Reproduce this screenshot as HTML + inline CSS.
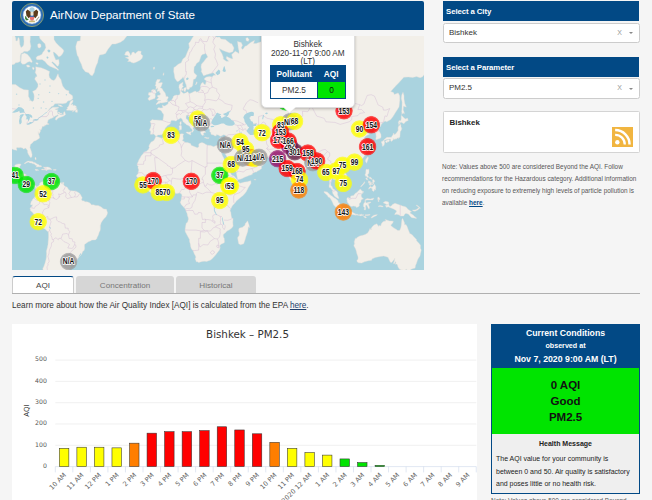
<!DOCTYPE html>
<html lang="en">
<head>
<meta charset="utf-8">
<title>AirNow Department of State</title>
<style>
*{box-sizing:border-box;margin:0;padding:0}
html,body{width:652px;height:500px;overflow:hidden;background:#f5f5f5;font-family:"Liberation Sans",sans-serif;color:#333}
.abs{position:absolute}
#hdr{left:12px;top:1px;width:412px;height:29px;background:#024985;border-radius:2px 2px 0 0;color:#fff}
#hdr .ttl{position:absolute;left:38px;top:-1.5px;line-height:29px;font-size:11.65px;white-space:nowrap}
#map{left:12px;top:36px;width:412px;height:234px;background:#aad3df;overflow:hidden}
.ph{background:#024985;color:#fff;font-weight:bold;font-size:7.8px;line-height:21px;padding-left:3.4px;white-space:nowrap;letter-spacing:-0.1px;overflow:hidden}
.sel{background:#fff;border:1px solid #ccc;border-radius:2.5px;font-size:8px;line-height:18.6px;padding-left:5.4px;color:#333}
.sel .x{position:absolute;right:16.5px;top:0;color:#999;font-size:7px}
.sel .ar{position:absolute;right:6px;top:8.5px;width:0;height:0;border-left:2.5px solid transparent;border-right:2.5px solid transparent;border-top:2.5px solid #888}
#city{left:442.5px;top:111.2px;width:197.2px;height:41.8px;background:#fff;border:1px solid #d4d4d4;border-radius:1.5px}
#city b{position:absolute;left:6px;top:5.5px;font-size:7.9px;color:#222}
#note{left:442px;top:160.9px;width:200px;font-size:6.42px;line-height:11.87px;color:#555;white-space:nowrap}
#note a{color:#024985;font-weight:bold;text-decoration:underline}
.tab{top:276px;height:18px;background:#d6d6d6;border-radius:3px 3px 0 0;font-size:8.1px;line-height:20px;text-align:center;color:#777}
.tab.on{background:#fff;border:1px solid #ccc;border-top:1.5px solid #024985;border-bottom:none;color:#444;line-height:17.5px}
#tabline{left:12px;top:293px;width:628px;height:1px;background:#b0b0b0}
#learn{left:12px;top:300.8px;font-size:8.2px;line-height:10px;white-space:nowrap;color:#333}
#learn a{color:#23406b;text-decoration:underline}
#chart{left:12px;top:324px;width:465px;height:180px;background:#fff}
#cc{left:491px;top:324px;width:149px;height:170px;border:1px solid #024985;background:#eee}
#cc .h{position:absolute;left:0;top:0;width:147px;height:43px;background:#024985;color:#fff;text-align:center;font-weight:bold}
#cc .g{position:absolute;left:0;top:43px;width:147px;height:66px;background:#00e400;color:#111;text-align:center;font-weight:bold;font-size:11.5px;line-height:16.1px;padding-top:8.6px}
#cc .m{position:absolute;left:0;top:109px;width:147px;height:59px;background:#efefef}
</style>
</head>
<body>
<div id="hdr" class="abs">
  <svg class="abs" style="left:8.1px;top:2.3px" width="24" height="24" viewBox="-12 -12 24 24">
    <circle r="11.6" fill="#2f6db3" stroke="#9aa862" stroke-width="0.8"/>
    <circle r="9" fill="#fdfdfb" stroke="#7fa8d8" stroke-width="0.5"/>
    <circle cx="0" cy="-5.2" r="2.6" fill="#a9d0e2"/>
    <path d="M-1.2 -3 L-4.4 -5.6 L-6.2 -3.4 L-5.6 0.2 L-3.4 3.2 L-1.4 1.4Z" fill="#5b3c1c"/>
    <path d="M1.2 -3 L4.4 -5.6 L6.2 -3.4 L5.6 0.2 L3.4 3.2 L1.4 1.4Z" fill="#5b3c1c"/>
    <path d="M-1.3 -3.2 h2.6 v3 h-2.6Z" fill="#e8e2d0"/>
    <path d="M-2.1 0.6 h4.2 v1.3 h-4.2Z" fill="#2f5fa8"/>
    <path d="M-2.1 1.9 h4.2 v1.8 q0 1.6 -2.1 2.2 q-2.1 -0.6 -2.1 -2.2Z" fill="#ea7676"/>
    <path d="M-7 1.2 q-0.6 2.6 1.6 4.2 l2.2 -0.6 q-2.6 -1 -2.6 -3.6Z" fill="#3c7d3c"/>
    <path d="M6.8 1.4 l-3.2 4 l0.9 0.3 l3 -3.6Z" fill="#9a9a8a"/>
    <path d="M-2.4 5.6 l-1 1.6 h6.8 l-1 -1.6Z" fill="#c9b77a"/>
  </svg>
  <div class="ttl">AirNow Department of State</div>
</div>

<div id="map" class="abs">
<svg class="abs" style="left:0;top:0" width="412" height="234" viewBox="0 0 412 234"><path fill="#f2efe9" stroke="#e6dfd8" stroke-width="0.4" stroke-linejoin="round" d="M182.2 -28.7L182.2 -0.9L180.0 2.5L178.4 5.3L176.7 7.5L177.4 11.5L175.0 17.0L173.4 21.0L170.9 22.9L169.2 26.7L166.2 28.2L163.6 30.4L161.9 31.5L161.7 35.7L162.2 37.7L162.9 42.3L165.1 45.5L166.7 45.2L168.1 43.9L170.5 42.0L171.0 40.7L171.5 41.7L172.0 42.7L173.2 46.5L174.2 48.9L174.5 51.5L175.0 52.8L175.4 53.6L176.4 53.4L177.3 53.0L177.7 51.5L179.4 51.2L180.6 49.7L181.1 46.3L181.4 43.6L183.3 42.7L184.4 40.7L184.9 39.4L182.0 36.7L181.9 34.6L182.2 30.8L183.3 29.9L184.5 27.5L187.2 25.6L188.4 22.0L189.2 19.8L190.3 18.6L193.6 17.6L194.3 18.0L195.8 21.0L194.2 22.2L191.9 25.4L189.4 28.2L189.0 31.1L189.7 33.9L189.2 35.3L190.4 37.6L191.6 39.7L194.9 38.6L198.3 37.6L201.3 36.7L203.8 39.2L201.7 39.2L200.1 40.9L197.5 40.6L194.6 40.9L192.5 42.3L192.7 43.9L194.2 44.3L194.0 46.0L193.5 48.6L192.0 48.3L191.0 46.3L189.3 47.4L188.4 50.1L188.5 52.5L187.5 54.7L186.5 55.6L184.5 56.3L183.9 55.2L182.6 55.3L179.3 56.9L177.1 57.7L175.7 55.7L173.5 57.0L171.5 57.6L170.3 56.5L169.1 55.2L169.6 53.1L170.4 51.2L171.5 50.3L170.5 49.5L170.5 48.6L171.0 47.2L171.0 46.3L170.0 46.8L167.7 48.3L167.1 49.5L166.9 51.6L167.5 53.1L167.8 54.9L168.2 56.2L168.1 57.2L167.9 57.8L167.6 58.7L166.9 58.9L165.4 59.3L164.9 59.0L162.6 59.4L161.3 60.4L161.0 61.8L160.2 63.0L159.4 64.5L158.7 64.7L157.3 65.5L156.5 65.8L156.1 66.5L156.1 67.5L155.2 68.5L153.6 69.6L152.8 70.1L151.4 69.8L150.7 69.2L150.2 69.0L150.7 71.2L150.9 71.7L148.8 72.0L146.7 71.6L145.5 72.5L145.6 73.3L146.6 73.7L147.8 74.1L148.8 74.5L149.7 75.2L149.9 76.1L150.4 77.0L151.5 77.9L151.7 79.2L151.3 81.4L150.9 84.1L150.1 84.6L148.4 84.3L147.1 84.2L144.0 84.0L141.7 83.9L140.6 83.4L139.4 84.3L138.0 85.5L138.8 87.1L139.0 89.4L138.8 90.5L138.6 91.6L137.7 93.3L137.6 94.5L138.2 94.7L138.6 95.1L138.7 96.3L138.4 98.3L140.2 98.3L141.8 97.9L142.9 99.3L144.1 100.4L144.5 100.1L146.1 98.9L147.6 98.9L149.3 98.7L149.7 98.9L150.7 97.7L151.7 97.0L152.2 97.0L152.6 95.5L153.7 94.6L152.9 93.1L153.4 91.9L154.8 90.4L155.5 89.5L157.1 88.8L158.9 86.8L158.5 85.9L159.6 84.3L161.1 84.4L162.3 84.6L163.3 85.0L164.5 84.7L165.5 83.6L166.9 83.2L168.3 82.0L169.8 82.8L170.5 84.0L170.9 85.4L171.9 86.6L173.0 87.3L173.8 88.1L174.4 88.7L176.0 89.3L177.1 90.1L178.0 90.5L178.4 91.9L179.7 93.0L180.1 93.3L180.3 94.7L179.5 96.0L180.1 96.4L181.0 95.4L182.0 93.9L180.9 92.6L181.5 91.0L182.0 90.9L183.4 91.8L184.0 92.4L184.2 91.6L183.3 90.5L181.5 89.5L180.4 87.7L179.9 87.6L178.4 87.5L177.0 86.5L175.9 83.9L174.3 82.8L173.9 81.9L174.2 80.7L174.0 79.6L176.3 79.1L176.5 81.0L177.5 79.9L178.7 82.7L180.8 84.1L183.5 86.0L185.2 87.3L185.8 89.1L185.8 90.9L186.7 92.2L187.1 93.0L187.9 94.2L188.9 95.6L188.5 96.6L189.5 98.7L190.9 99.5L191.4 98.7L192.0 99.4L191.4 97.2L192.9 96.4L193.4 96.9L193.4 95.8L192.7 95.3L191.6 93.3L191.5 92.1L191.6 90.6L192.4 91.5L193.2 91.9L194.0 91.6L194.0 89.9L196.5 90.1L197.0 91.8L196.9 93.0L197.9 93.4L197.7 95.4L198.8 96.5L199.0 98.3L200.4 98.7L201.9 99.1L202.8 100.0L204.2 99.8L204.5 98.6L206.7 99.2L208.1 100.3L209.9 99.8L211.1 98.7L212.7 99.1L213.6 99.1L213.3 100.3L212.9 101.4L213.2 102.6L213.0 103.5L212.5 104.6L211.7 106.8L211.3 108.3L210.8 109.4L209.7 110.2L207.2 109.9L207.6 112.4L208.3 114.2L209.3 115.6L210.4 116.6L210.8 115.2L211.4 113.3L211.6 113.6L211.0 116.1L212.8 117.3L214.1 119.4L215.4 121.6L216.8 123.3L218.3 125.7L218.6 128.0L220.5 130.4L221.8 132.3L223.3 134.6L224.2 136.1L224.9 139.8L225.4 142.4L225.7 143.5L228.3 143.2L230.8 142.2L232.5 141.3L235.2 140.2L237.5 139.3L238.7 139.1L240.4 138.3L240.3 137.4L243.5 136.0L244.5 136.0L245.5 135.1L247.2 134.3L249.6 132.5L249.5 131.3L249.6 130.0L251.0 129.6L253.0 126.2L252.5 126.1L251.0 124.2L247.9 122.9L247.2 121.4L247.1 119.2L246.6 120.2L245.5 121.2L244.0 122.7L241.6 123.2L239.3 123.3L238.6 122.4L239.3 121.8L239.2 121.1L239.3 120.0L238.6 119.6L238.0 121.0L237.9 122.1L237.0 120.6L236.9 119.0L236.1 118.0L234.7 116.7L234.2 115.3L233.3 113.5L233.2 112.4L234.2 112.4L235.3 111.4L236.8 112.1L238.1 114.3L239.1 116.4L241.0 117.2L244.8 118.8L247.1 117.6L248.4 117.8L248.3 118.5L249.6 120.5L254.3 121.1L257.1 121.4L259.1 121.2L261.0 121.3L263.3 120.9L264.3 121.0L265.0 122.0L265.8 123.7L267.0 124.2L267.6 125.0L268.9 125.6L270.3 125.3L268.4 126.3L268.2 126.7L269.3 127.8L270.5 129.1L271.6 129.5L273.4 128.6L273.6 127.6L274.2 126.6L274.4 128.7L274.7 130.0L274.6 132.6L275.4 136.0L276.3 138.7L276.8 139.8L277.9 143.0L279.5 145.8L280.4 148.0L281.4 150.5L282.5 151.2L283.5 150.0L285.4 149.1L286.4 147.5L286.4 144.7L287.1 142.7L286.8 140.3L286.8 138.6L288.5 137.4L290.4 136.7L292.1 134.7L293.4 133.7L294.8 132.0L296.3 131.1L297.8 130.2L298.3 128.0L299.2 127.8L300.1 127.7L301.6 127.7L303.7 127.3L304.6 126.4L306.2 126.6L306.6 128.2L307.1 129.2L308.1 130.4L309.2 131.8L310.5 133.4L310.8 134.9L310.2 137.7L311.9 138.1L313.7 136.8L314.7 135.4L315.9 136.8L316.3 139.0L316.7 141.1L317.6 143.8L317.5 148.0L317.1 149.7L317.1 151.5L318.1 151.3L319.1 152.5L320.0 153.7L320.4 154.5L320.4 155.7L320.9 157.7L321.9 159.1L322.1 159.7L322.9 160.5L323.6 161.0L324.7 161.7L325.9 162.5L326.7 162.5L327.1 162.4L326.3 160.6L325.5 158.4L325.6 156.7L325.1 155.8L323.6 154.4L322.9 153.9L322.0 153.2L320.9 152.7L320.1 150.6L318.8 149.3L318.7 147.1L319.6 144.9L319.8 143.6L320.0 142.5L320.8 142.0L321.4 143.0L321.5 143.5L322.1 143.5L323.4 143.7L324.1 144.4L324.8 145.3L325.7 146.9L326.9 147.0L327.4 147.3L328.4 148.0L327.8 150.3L328.9 149.8L330.7 148.6L331.2 147.5L331.7 147.4L333.4 146.4L334.9 145.3L335.2 144.1L335.5 142.7L335.3 141.6L334.7 139.2L333.6 137.5L332.6 136.8L331.0 135.1L329.5 133.0L329.8 131.1L331.1 129.3L331.7 129.0L333.2 128.0L335.1 128.1L336.1 128.6L336.1 130.1L337.2 130.1L337.5 128.6L339.4 127.9L341.2 127.5L342.5 126.9L342.5 125.9L343.5 126.6L344.4 126.1L345.5 125.8L347.7 124.7L350.0 122.7L351.0 121.9L352.5 119.8L353.4 118.4L354.7 116.3L355.9 115.0L356.4 112.7L354.9 111.7L356.4 110.6L356.4 109.0L355.7 108.2L354.7 107.0L354.0 105.4L353.0 103.6L352.0 102.9L352.5 101.6L353.8 100.3L355.7 98.9L357.4 98.4L356.7 97.3L355.5 97.2L354.4 96.6L353.0 97.6L351.5 97.7L351.7 96.6L350.5 96.0L349.5 94.2L350.9 93.9L352.5 92.1L354.7 90.4L355.2 89.9L356.7 90.5L356.2 91.9L355.4 93.2L355.9 94.3L357.0 93.4L360.4 92.0L361.5 92.8L361.9 94.7L361.2 96.0L362.7 96.4L364.1 97.4L363.9 98.9L364.2 100.5L363.8 102.9L364.1 103.8L366.1 103.1L368.4 102.2L368.9 101.4L369.1 100.3L368.9 98.3L368.1 96.7L367.5 95.8L365.7 93.6L365.9 92.4L367.0 91.7L368.5 90.5L369.5 88.1L370.5 86.9L373.0 85.0L374.7 85.7L378.7 83.6L381.0 80.6L383.3 76.8L387.0 71.0L387.8 64.3L387.7 59.8L386.2 56.9L382.3 58.6L381.5 56.6L378.7 55.5L383.4 50.3L387.3 46.2L391.8 41.2L396.2 41.0L400.7 41.4L404.5 40.6L408.1 41.7L410.6 40.7L413.1 37.4L423.1 37.4L423.1 -28.7L253.3 -28.7L253.3 3.0L252.5 6.6L250.0 4.8L249.1 5.7L244.1 7.5L241.6 7.5L242.5 4.4L239.1 6.2L236.7 8.0L234.7 9.8L233.0 10.2L230.8 13.4L229.2 11.9L230.5 9.3L229.2 6.6L225.5 5.5L226.3 11.9L227.0 14.9L227.0 17.6L225.5 16.6L223.3 15.3L219.7 18.6L220.2 20.6L220.8 22.7L219.7 22.7L216.7 21.6L214.7 20.4L214.2 22.2L215.0 23.3L216.7 25.2L214.2 25.2L211.3 22.9L211.3 21.2L210.0 17.8L208.3 14.9L207.3 12.4L210.5 14.3L214.2 15.7L217.5 16.8L220.8 15.7L222.0 11.9L219.7 7.8L218.3 7.5L213.3 3.4L209.0 3.0L207.5 1.1L205.3 1.3L203.4 0.6L201.2 -1.1L200.0 -2.8L199.2 -28.7ZM-13.1 48.6L-0.3 48.6L3.6 48.6L7.5 51.6L11.9 53.7L16.4 54.1L16.5 57.5L16.4 60.3L17.5 62.4L19.2 64.9L20.7 65.4L21.9 64.3L22.0 62.4L22.2 60.3L21.9 58.0L20.6 55.6L23.9 53.7L25.9 50.7L26.0 48.0L23.4 44.1L22.7 43.0L24.7 38.9L23.2 36.4L23.9 33.9L23.7 30.8L27.4 31.5L29.0 31.7L33.6 33.6L37.5 35.5L36.9 39.1L37.5 41.4L39.5 43.8L41.8 44.6L43.5 43.1L44.7 40.4L46.0 37.7L46.8 40.7L49.2 43.9L49.2 44.9L50.7 50.0L53.2 53.3L54.8 54.3L57.0 54.9L56.8 56.6L57.2 57.5L58.5 58.3L60.5 59.7L60.8 62.4L59.5 63.8L58.3 64.6L55.7 65.1L54.3 67.0L50.5 67.8L47.5 67.6L42.8 67.8L41.2 70.1L39.9 70.3L37.3 73.0L34.9 76.3L37.6 73.7L39.3 72.2L41.0 71.2L46.5 71.2L46.5 72.1L42.8 73.2L45.2 73.9L46.0 73.5L45.2 75.6L46.0 77.8L47.2 78.0L49.0 79.0L50.3 78.5L51.2 79.2L51.8 76.1L52.7 75.7L53.3 77.8L53.6 78.5L51.8 79.9L47.6 81.6L46.3 82.1L44.2 84.3L43.3 83.4L43.8 81.6L46.2 79.8L46.0 78.7L43.4 80.0L41.8 80.9L41.2 81.6L39.8 82.3L38.7 82.5L36.5 83.8L35.7 85.1L35.9 86.0L35.2 86.7L35.9 87.6L36.0 88.1L36.9 88.2L36.9 87.4L36.5 87.4L36.9 88.3L35.9 88.5L34.9 88.6L33.7 89.1L32.0 89.2L33.5 89.7L31.0 90.6L30.2 90.6L30.2 90.9L29.5 93.3L28.7 94.2L27.7 93.0L28.4 94.5L28.4 95.5L27.9 96.4L26.9 98.1L26.4 97.0L26.2 95.6L26.4 98.3L26.9 98.5L27.7 101.9L26.0 103.2L23.6 104.7L22.0 105.0L20.4 106.9L18.5 108.4L17.9 111.6L19.3 115.3L20.1 118.5L20.0 120.3L19.5 121.3L18.4 121.4L17.2 119.6L16.5 118.5L15.7 116.7L15.5 114.6L15.1 113.9L13.5 112.1L11.9 113.0L11.3 112.9L10.7 112.0L8.2 111.6L6.9 111.8L5.0 111.6L4.4 112.1L4.8 113.6L5.0 114.2L4.5 114.3L3.2 114.0L1.6 113.7L0.2 113.1L-13.1 113.1L-13.1 133.3L-0.9 133.3L0.6 133.1L2.4 131.9L2.6 131.0L2.9 129.2L4.1 128.4L6.5 127.9L8.5 127.9L9.0 128.7L8.5 129.6L7.8 130.3L7.8 131.8L7.2 133.3L6.5 133.3L6.5 135.1L6.4 136.7L5.5 137.5L5.4 138.0L5.9 138.1L7.0 138.0L7.8 138.1L8.9 138.1L10.2 137.8L11.9 137.7L13.0 138.0L15.0 139.4L14.5 141.1L14.4 142.9L14.0 144.6L14.0 146.4L15.1 148.0L15.9 148.6L16.5 149.1L17.0 149.7L18.5 150.0L20.4 149.1L20.8 148.7L22.0 148.9L23.7 149.7L24.6 150.2L25.6 151.2L25.4 150.3L26.2 149.9L27.2 149.0L27.5 148.8L27.7 147.3L28.9 146.2L29.9 145.8L32.0 145.3L34.1 143.8L35.0 144.4L34.6 144.9L33.6 145.3L34.2 146.3L35.2 146.3L36.5 145.4L36.4 144.6L36.9 144.2L37.2 145.1L37.5 145.5L39.5 145.9L40.2 147.1L42.0 146.9L43.4 146.9L45.2 147.8L45.7 147.7L46.5 147.2L48.5 146.8L50.3 146.8L49.3 147.6L51.8 148.6L52.2 149.7L53.5 150.5L55.2 151.3L56.6 153.4L58.3 154.7L61.5 154.9L63.5 155.0L66.3 156.4L67.7 157.5L68.3 158.2L70.2 161.7L69.5 163.7L70.2 164.7L72.6 165.0L72.8 165.9L73.6 165.7L74.6 165.7L75.8 166.1L78.0 167.0L79.6 168.9L81.1 168.7L83.8 169.4L86.0 169.4L89.3 170.9L90.6 172.2L91.8 172.9L94.5 173.3L94.8 174.4L95.5 176.6L95.3 178.1L94.0 180.8L91.7 183.0L89.3 186.4L88.4 189.6L88.4 192.5L88.1 194.7L87.3 196.1L86.3 199.2L85.1 201.5L85.1 202.3L83.5 203.9L81.5 204.0L79.6 204.1L79.1 204.7L76.3 205.8L73.6 207.7L72.6 208.6L72.5 209.9L72.6 212.5L72.2 214.2L70.6 215.8L69.7 218.1L68.3 219.8L66.7 221.3L64.5 224.5L61.9 226.9L59.8 226.8L57.1 225.9L56.2 225.0L56.2 226.2L57.0 226.7L58.2 227.9L59.0 229.7L57.6 233.2L55.7 234.5L55.7 248.8L31.0 248.8L31.0 234.0L30.8 232.4L31.7 230.7L32.9 227.6L34.1 223.1L34.4 221.0L34.6 217.0L34.4 215.2L35.4 211.5L36.0 208.4L36.2 205.2L36.5 202.4L36.6 199.1L36.4 196.1L34.6 194.6L33.5 193.4L32.4 192.7L29.7 191.4L28.2 190.6L26.4 187.9L26.0 186.5L24.9 184.9L24.2 183.3L22.5 179.9L21.8 178.3L20.9 177.1L20.4 176.2L18.3 174.5L18.4 173.1L18.0 172.5L19.5 170.5L20.2 170.2L20.4 168.5L19.7 169.0L18.5 168.4L19.0 166.3L19.4 165.3L20.1 164.6L20.8 163.1L22.0 162.0L22.2 161.7L23.2 160.4L25.0 158.2L24.4 157.5L24.3 155.5L24.5 154.4L23.7 152.7L23.3 152.2L23.0 150.8L22.0 150.3L21.0 149.7L20.5 150.3L19.5 150.8L20.2 152.3L18.7 152.7L18.2 151.8L17.4 151.2L16.4 150.9L15.4 151.3L14.7 150.7L14.0 150.6L13.7 149.5L13.3 149.0L12.1 148.0L11.7 148.7L10.5 147.5L10.3 146.4L10.4 145.8L8.2 143.7L7.7 142.9L7.2 142.4L6.0 142.6L3.8 141.8L2.1 141.3L-0.1 140.3L-13.1 140.3ZM143.6 100.8L144.6 100.6L148.4 101.8L150.1 102.2L152.4 101.0L155.1 99.3L158.4 98.7L161.7 98.7L166.4 98.5L169.7 97.7L171.7 98.1L171.0 99.5L171.0 100.8L171.4 103.0L170.2 104.6L171.7 105.2L173.4 106.6L175.4 106.6L178.5 107.6L179.4 109.4L181.0 110.0L183.4 110.9L185.4 111.7L186.9 110.8L186.7 108.4L187.7 107.2L190.0 106.6L191.9 107.2L193.4 108.2L195.4 109.2L198.7 109.6L201.7 110.7L203.2 110.0L205.0 109.3L206.3 109.4L207.2 109.8L208.3 110.2L208.3 112.3L207.5 112.3L207.7 113.1L208.5 115.3L209.7 117.6L210.0 118.5L210.5 119.7L211.5 121.5L212.5 123.7L212.7 125.2L214.3 126.8L215.0 128.9L215.3 131.4L215.5 132.3L216.2 133.5L217.7 134.2L218.5 136.7L219.2 138.4L220.3 139.4L222.0 140.1L224.5 142.9L225.5 143.7L225.5 144.7L225.2 145.3L224.3 145.3L225.8 145.7L228.3 147.2L230.8 146.6L232.5 146.1L235.3 145.8L237.5 145.1L238.8 144.8L239.0 147.3L238.1 148.8L236.5 151.3L235.0 154.2L234.2 155.8L232.5 158.0L230.5 159.9L228.8 161.3L228.0 161.9L225.8 163.7L224.2 165.3L222.7 167.4L221.5 168.5L220.2 170.0L219.5 171.4L218.5 173.2L218.0 175.0L218.8 176.0L219.0 178.1L219.2 179.6L219.5 181.4L220.3 181.9L221.0 182.6L220.8 186.5L221.0 188.9L221.2 190.0L219.8 192.0L217.5 193.8L215.0 195.0L213.8 196.6L211.5 198.3L211.2 199.9L211.8 201.7L212.2 202.3L212.5 205.7L212.2 206.8L209.5 207.9L207.7 209.5L208.2 211.2L207.5 214.1L206.8 214.8L205.1 216.9L203.8 218.8L202.5 220.2L199.9 223.0L198.2 224.2L196.0 224.9L194.7 225.4L192.4 225.2L190.2 225.4L186.7 226.6L185.5 225.8L184.2 225.7L184.0 224.8L183.2 223.0L183.9 221.0L183.2 219.4L182.2 217.7L181.5 215.7L180.9 214.4L179.5 212.9L178.7 210.8L178.2 207.7L177.5 205.2L177.5 203.5L175.7 200.3L173.4 195.9L173.0 193.9L173.6 190.3L174.2 187.2L175.7 185.9L176.4 183.1L176.2 181.4L175.4 179.4L175.2 177.8L174.0 174.9L173.7 174.0L173.1 172.7L171.1 170.4L169.4 168.7L168.1 165.9L168.9 165.2L169.1 164.0L169.4 163.0L169.6 161.6L169.9 159.8L169.6 158.0L168.2 157.2L167.2 157.0L165.1 157.4L163.6 157.5L162.6 156.0L161.7 155.0L160.7 154.2L159.1 153.9L157.4 154.1L155.4 154.4L154.2 155.1L153.1 155.4L151.3 156.2L149.9 156.8L148.2 156.2L146.7 155.9L145.1 156.1L143.2 156.4L142.4 156.8L140.6 157.4L138.3 156.4L136.7 154.9L135.4 154.2L134.3 153.2L132.6 152.2L131.3 150.5L130.6 148.8L129.1 146.9L128.1 145.9L127.4 144.8L125.6 143.9L125.8 142.1L125.4 141.2L124.3 140.0L124.9 138.9L125.9 137.7L126.3 136.0L126.8 134.0L125.9 131.8L126.3 130.3L125.0 129.3L125.3 127.5L126.3 125.5L126.8 124.1L128.1 121.9L129.3 119.7L131.1 117.7L131.9 116.2L134.5 115.2L136.4 113.4L137.4 111.5L136.9 111.1L137.1 109.4L138.0 107.8L139.2 105.9L140.7 105.2L142.0 104.4L143.2 102.0ZM235.5 184.8L236.5 187.4L237.0 188.8L237.5 191.5L236.3 190.8L236.2 192.0L235.7 195.4L234.8 198.2L233.9 200.8L233.1 203.7L231.7 207.8L228.6 208.8L226.7 207.7L226.1 204.7L225.6 201.8L227.2 199.2L227.3 196.9L226.7 195.3L226.7 193.4L227.4 192.0L228.8 191.7L230.5 191.2L232.2 189.8L232.9 189.4L233.3 187.6L234.7 185.9ZM143.9 68.2L144.7 68.4L146.5 67.4L147.3 67.8L147.7 66.7L149.3 67.0L151.2 66.7L153.2 66.2L155.0 65.9L155.6 65.3L155.7 64.6L154.4 64.3L155.4 63.5L156.3 61.6L155.6 60.4L153.9 60.5L154.0 59.8L153.6 58.6L153.2 57.2L152.4 56.0L151.1 54.6L150.1 52.4L148.1 51.6L149.1 50.7L150.0 48.2L150.4 47.1L150.1 46.5L146.4 47.1L147.1 46.0L148.2 44.1L148.3 43.5L145.1 43.6L144.6 44.7L143.7 46.8L143.9 47.7L143.7 48.6L143.1 49.5L144.2 50.4L143.7 53.7L144.7 52.8L145.4 51.8L145.7 53.3L145.0 54.9L145.3 55.6L147.4 54.9L147.4 56.0L148.1 57.2L148.6 57.2L148.3 58.0L148.2 59.0L147.0 59.3L145.7 59.3L145.5 60.8L146.7 61.6L145.6 62.7L144.6 63.3L144.9 63.9L146.4 64.2L148.2 64.5L149.0 64.1L148.4 64.9L146.6 65.1L145.8 65.7L145.2 66.8L144.2 67.8ZM141.2 53.6L143.2 54.0L143.9 55.6L144.3 56.6L143.1 57.5L143.2 59.3L143.4 60.4L142.8 62.4L141.7 62.7L139.7 63.5L137.1 64.5L136.2 63.3L136.0 62.7L136.9 61.5L138.4 59.8L136.4 59.1L136.6 57.5L136.8 56.6L138.1 56.6L139.1 56.6L139.6 55.7L139.6 54.1ZM115.6 25.6L116.8 24.3L116.6 22.9L113.4 21.6L116.8 21.0L115.9 19.4L112.6 19.0L113.8 16.1L116.1 15.1L117.9 17.4L118.4 19.4L119.6 18.2L119.9 16.6L121.9 16.1L123.1 17.8L124.9 16.1L126.4 14.9L129.2 15.3L128.8 18.0L130.8 19.8L130.1 22.2L128.4 23.9L125.1 25.8L121.8 27.1L119.6 26.5L118.1 25.4ZM116.8 -11.1L115.9 -1.3L111.8 3.9L108.4 6.2L103.5 8.0L100.1 8.0L96.0 13.2L93.5 17.4L90.8 18.6L87.6 19.0L86.3 22.9L85.6 26.7L84.3 29.3L83.0 32.9L82.3 36.4L80.3 39.7L78.8 39.2L78.0 38.6L76.6 36.7L73.3 35.7L70.6 32.2L69.5 28.6L67.3 24.1L66.5 21.0L65.3 19.4L64.0 13.0L63.8 10.2L65.3 5.3L68.2 4.8L68.3 3.0L68.7 -0.4L68.5 -11.1ZM174.1 96.6L174.2 96.1L175.6 95.9L176.7 96.2L178.8 95.7L179.4 95.7L178.5 97.3L178.9 98.2L178.6 99.0L177.1 98.2L176.0 97.7L175.1 97.3ZM167.1 89.9L168.7 89.2L169.4 89.8L169.6 91.9L169.3 93.8L168.6 93.6L168.1 94.3L167.4 94.1L167.5 92.1L167.1 90.7ZM169.1 85.2L169.1 85.9L169.3 87.3L169.0 88.4L168.6 88.9L167.8 87.7L167.9 86.3L168.6 85.8ZM192.6 101.4L193.5 101.2L195.2 101.7L197.2 101.8L197.1 102.3L195.0 102.6L193.4 102.0L192.6 101.9ZM207.2 102.3L208.2 102.0L208.8 101.7L211.0 101.0L209.9 102.2L210.1 102.5L209.4 102.6L208.3 103.2L207.3 102.9ZM157.4 92.9L158.6 92.0L159.1 92.5L158.6 93.4L157.9 93.2ZM286.9 148.3L288.6 150.4L289.4 151.8L289.7 153.0L288.4 154.5L287.6 154.8L286.9 154.6L286.4 153.2L286.3 151.3L286.4 149.7L286.4 148.4ZM312.1 155.4L315.2 156.0L316.6 157.2L317.7 158.4L319.7 159.9L321.2 161.1L322.3 161.9L323.6 162.5L324.9 163.7L326.1 164.7L326.2 166.4L327.2 166.4L328.1 168.5L329.7 169.7L329.9 170.2L329.6 171.7L329.7 174.4L328.7 173.9L327.6 174.5L326.4 173.4L323.6 171.0L321.6 168.9L320.5 166.3L319.6 164.5L317.9 161.8L316.2 160.9L315.2 159.3L313.4 157.8L312.1 156.4ZM328.6 176.0L329.9 174.6L331.3 174.9L334.1 175.9L337.2 176.3L338.2 175.4L340.9 176.2L341.1 176.7L342.7 177.6L343.2 177.6L343.9 178.4L344.0 179.3L341.5 178.7L338.2 178.5L336.6 177.9L334.9 177.6L334.1 177.6L332.4 177.6L330.6 177.0ZM344.0 178.3L345.2 178.1L346.0 178.7L345.2 179.4L344.2 178.7ZM346.4 178.7L347.2 178.4L347.7 178.9L347.4 179.6L346.4 179.4ZM347.8 178.7L349.5 178.2L350.4 178.7L351.9 178.8L351.5 179.3L349.9 179.5L348.2 179.9L347.9 179.4ZM352.9 178.7L354.9 178.7L357.0 178.6L358.2 178.5L357.9 179.1L355.7 179.6L353.2 179.4ZM351.5 180.6L353.2 180.3L354.5 181.4L353.7 181.9L351.9 181.1ZM359.0 182.0L360.0 180.4L361.9 179.2L364.0 178.8L365.4 178.7L364.2 179.7L361.9 180.8L360.2 181.8ZM336.0 161.3L337.1 162.0L338.5 162.2L338.7 160.1L341.6 159.4L343.1 157.4L344.8 156.4L346.6 154.8L348.0 153.2L348.7 153.2L349.2 154.0L350.0 154.9L352.0 156.0L350.5 156.4L350.9 157.3L349.7 157.6L349.2 159.2L349.5 161.0L351.5 163.0L349.9 163.2L349.0 164.7L349.0 165.9L348.0 166.8L347.2 168.0L347.4 169.7L346.5 170.7L344.3 171.6L344.0 170.4L341.5 170.0L339.5 170.5L337.9 169.7L336.6 167.8L335.2 166.0L335.2 164.8L334.8 163.2L335.0 162.2ZM361.3 162.2L361.9 162.0L361.4 163.2L360.4 164.0L358.3 163.9L354.9 164.0L353.2 164.4L353.5 166.0L354.4 167.0L356.5 166.3L358.9 165.9L358.9 166.4L357.2 167.4L355.4 167.9L356.4 168.0L356.9 169.7L357.5 171.3L357.4 172.6L356.5 172.8L355.9 171.4L354.7 169.1L353.5 169.7L353.8 172.2L353.5 174.0L352.4 174.0L352.2 173.3L352.5 171.4L351.5 170.6L351.4 169.1L352.0 166.9L353.0 166.2L352.9 164.7L353.2 163.5L354.5 163.0L354.9 162.5L358.2 163.1ZM365.7 161.5L366.5 161.0L367.7 162.2L367.7 164.0L366.4 163.2L367.0 165.4L366.4 166.0L365.9 164.0L365.7 163.0ZM366.4 170.0L368.2 169.4L371.2 170.2L370.7 171.0L368.2 170.4L366.5 170.5ZM371.9 166.1L373.8 165.3L376.6 166.1L376.8 167.0L376.7 168.7L377.5 170.2L379.0 170.3L380.5 168.5L383.0 167.2L384.4 167.8L387.7 168.9L388.7 169.2L390.4 169.9L392.6 170.6L394.0 171.1L396.2 173.4L397.8 174.5L399.6 175.7L398.2 176.0L398.3 177.2L400.0 178.2L402.0 179.7L403.0 180.9L404.6 181.9L404.2 182.5L402.3 182.0L399.8 181.7L398.4 180.6L396.5 178.2L394.5 177.5L393.5 177.4L392.3 178.7L391.8 179.9L390.2 180.1L388.2 179.9L387.2 178.9L384.8 178.2L382.7 178.7L383.2 177.1L384.5 176.0L384.2 174.5L383.3 174.0L381.5 172.9L379.7 172.2L377.8 171.5L376.0 170.8L374.7 171.4L373.2 169.5L375.7 169.0L376.2 168.7L374.3 168.4L373.0 167.5L371.3 167.0ZM400.3 174.1L403.1 173.9L404.8 173.2L406.8 171.7L407.1 172.7L405.6 174.0L403.1 175.2L401.5 175.0ZM404.5 169.0L406.5 170.2L408.3 172.0L408.0 172.7L406.1 170.7L404.3 169.4ZM390.7 182.6L392.3 186.2L392.8 188.9L394.0 188.6L395.2 190.7L396.1 193.3L397.8 197.4L400.2 198.7L401.8 200.7L404.5 203.5L404.5 204.8L405.3 205.6L407.1 207.4L408.5 209.2L408.4 212.2L409.1 213.6L409.2 214.5L408.4 217.7L408.0 219.9L406.1 222.8L405.3 224.7L404.5 227.2L403.5 229.6L403.1 232.1L399.8 233.0L398.2 234.0L397.2 236.4L394.7 236.4L394.7 233.2L393.7 233.8L392.3 235.0L390.7 234.0L389.2 233.9L387.5 233.3L386.0 231.0L385.5 229.0L384.7 228.1L383.3 228.2L384.0 226.8L383.2 225.4L382.7 227.4L381.3 227.6L382.3 225.0L382.8 222.0L382.5 223.0L381.3 224.6L379.7 226.4L378.3 226.2L376.8 223.0L376.0 221.3L371.8 220.0L368.2 220.4L363.2 221.6L359.9 223.0L359.7 224.2L356.4 224.7L352.4 225.8L349.7 227.1L346.5 226.8L345.1 225.7L344.9 224.1L346.0 223.6L346.1 221.0L344.9 217.7L344.2 214.7L343.5 212.7L341.8 209.8L342.6 207.5L342.2 205.9L343.5 201.9L343.9 203.0L345.0 201.6L347.8 199.9L350.9 199.2L353.2 198.5L355.7 196.9L356.9 195.1L358.0 192.4L359.2 194.0L359.2 192.2L360.5 190.5L362.0 189.1L364.8 187.8L366.7 190.5L366.9 189.6L369.0 189.8L369.2 188.1L370.2 186.5L371.3 185.6L372.3 185.2L374.0 185.0L373.2 183.5L374.8 184.1L377.3 184.9L379.7 185.0L381.3 185.3L380.8 187.0L379.7 187.9L378.8 189.5L381.2 191.5L383.2 192.7L385.3 194.1L385.8 194.6L387.8 194.3L388.8 191.7L389.2 189.8L389.6 185.9L390.0 183.1ZM369.4 106.0L369.6 106.9L370.2 108.0L370.3 109.8L370.9 110.4L371.7 109.6L372.3 108.6L372.7 105.9L371.5 104.5L370.5 105.2L369.6 105.5ZM374.1 104.4L376.6 103.7L377.6 104.0L376.8 105.9L375.8 105.4L374.8 107.0L373.9 106.0L373.2 105.7ZM371.3 104.5L372.2 103.6L373.3 102.6L374.9 101.3L376.8 101.3L379.3 101.3L379.8 100.4L381.0 98.7L381.0 97.7L382.1 97.3L381.8 98.8L383.6 97.9L384.9 96.3L386.2 94.3L386.0 92.0L386.5 90.6L387.1 89.2L387.7 90.1L388.0 88.5L388.9 88.8L389.0 90.7L389.8 92.7L389.2 94.3L388.2 95.7L388.1 98.4L387.9 101.0L386.3 102.6L386.2 101.2L385.9 102.1L385.1 101.9L384.6 103.2L384.0 102.4L383.5 103.2L381.5 103.2L381.3 102.4L381.3 103.8L379.4 105.5L378.3 104.0L378.8 103.1L378.2 103.1L376.4 103.3L373.9 103.7L372.2 104.4ZM386.7 88.8L387.7 88.1L388.5 88.0L387.0 86.8L388.2 86.8L389.2 86.2L391.9 87.7L393.8 85.4L396.2 84.4L395.4 82.1L393.7 83.0L392.1 82.1L389.7 79.4L389.2 79.7L389.2 83.1L388.7 84.8L387.1 84.4L386.3 86.5L386.7 87.8ZM389.8 78.5L389.9 76.8L389.6 75.8L389.9 73.4L390.0 70.8L390.1 65.9L389.3 62.4L389.7 59.1L391.0 56.3L392.0 59.7L392.0 63.0L392.8 67.5L394.3 71.1L391.5 70.3L391.2 73.9L392.2 76.3L392.2 78.1L391.2 76.8ZM355.8 121.1L356.5 121.7L355.9 123.7L354.6 127.3L353.4 125.3L353.5 124.1L354.9 121.7ZM334.3 132.1L335.7 130.7L337.1 130.5L338.2 131.3L337.4 132.8L335.7 133.9L334.4 133.3ZM354.2 133.3L355.9 133.6L356.9 133.3L357.0 135.4L356.9 137.4L355.8 138.1L355.9 140.0L357.0 141.0L358.7 141.3L360.1 142.9L360.0 143.6L359.2 143.0L357.5 142.5L357.5 141.3L356.0 141.3L354.9 141.6L354.7 140.3L353.9 140.4L353.4 139.8L353.0 138.2L353.7 137.6L353.8 136.7L353.8 135.0ZM356.6 153.2L357.0 151.5L358.8 150.3L359.5 151.2L360.2 151.0L360.9 150.5L362.4 148.3L363.7 150.5L363.8 151.0L363.5 154.2L362.5 152.9L362.2 154.7L361.8 155.4L360.2 154.4L360.2 152.7L359.0 152.0L358.9 151.7L357.9 152.3ZM360.4 143.7L362.0 143.7L362.7 145.9L361.5 146.3L361.9 147.6L361.2 148.0L360.5 146.4L360.7 145.4ZM357.2 148.1L358.0 146.4L359.0 146.4L358.7 149.1L358.2 149.6L357.5 149.0ZM358.9 148.8L359.9 145.9L359.9 147.1L359.2 148.6ZM356.4 144.7L357.5 145.3L358.4 145.4L358.2 146.4L356.5 147.2L356.4 146.3ZM353.7 142.2L354.9 142.0L355.7 143.5L355.2 144.2L354.5 143.4ZM348.5 150.7L349.9 149.1L351.5 147.3L352.5 145.6L352.7 146.9L350.9 149.1L349.2 150.7ZM359.5 148.5L360.5 147.8L360.9 148.4L360.0 148.7ZM171.7 52.5L173.0 51.6L174.4 51.5L174.4 52.8L173.7 54.3L173.4 55.5L172.0 55.3L171.9 53.7ZM169.7 53.1L170.7 52.8L171.4 53.7L171.2 54.4L170.2 54.4L169.7 53.9ZM233.8 2.5L235.3 1.5L237.1 3.4L236.3 5.3L234.3 4.8ZM141.2 31.8L142.4 30.9L142.7 32.2L141.9 33.6ZM150.9 39.1L151.7 36.7L151.9 38.4L151.2 39.4ZM183.5 48.6L184.7 45.8L185.2 46.2L184.7 47.7L184.0 48.8ZM242.1 143.5L243.3 143.4L244.1 143.6L243.3 144.1L242.5 144.0ZM61.1 64.1L60.7 66.2L58.8 68.5L59.2 68.8L60.8 68.0L61.0 69.8L62.2 69.2L64.3 70.2L63.7 71.9L65.0 71.6L64.0 73.9L65.3 73.1L65.0 74.6L65.7 74.5L65.1 76.7L64.0 75.8L63.2 76.2L63.5 74.1L60.3 76.1L61.5 74.3L60.5 74.6L58.8 74.5L57.5 74.3L54.7 74.3L54.5 73.6L56.0 72.1L54.8 71.9L56.3 70.6L56.9 69.4L57.9 66.5L58.8 64.9ZM46.0 68.7L48.7 69.1L50.7 70.6L48.7 70.5L46.3 69.2ZM46.2 76.1L47.0 75.9L48.5 77.3L50.2 77.2L49.3 78.2L47.7 77.8L46.7 76.9ZM12.0 127.4L13.5 126.6L14.9 125.4L16.2 125.1L17.5 125.2L18.2 125.2L20.2 125.5L21.9 126.4L22.9 126.6L24.9 127.9L26.9 128.7L27.5 129.5L28.7 129.5L29.9 130.3L28.2 130.9L27.1 130.8L23.9 131.0L24.9 130.1L24.4 129.5L23.0 129.0L22.7 128.0L20.2 127.6L19.5 127.0L18.2 126.9L16.9 126.4L16.4 125.9L14.5 126.8L13.5 127.6ZM31.2 131.1L33.2 131.1L34.1 131.0L35.7 131.1L37.0 131.3L38.2 131.9L39.0 132.6L39.6 133.2L39.2 133.9L38.6 133.5L37.0 133.4L36.0 133.8L35.0 133.9L34.5 134.9L33.9 134.2L32.6 133.9L30.6 133.9L29.4 133.6L30.0 133.1L31.9 133.4L32.9 133.3L32.4 131.7ZM22.9 133.8L23.7 133.3L25.4 133.5L26.5 134.0L26.5 134.4L25.5 134.3L24.9 134.7L23.5 134.2ZM41.4 133.6L43.5 133.4L44.2 133.6L44.0 134.2L41.5 134.3ZM50.3 146.8L52.0 146.6L51.8 147.8L50.3 147.9ZM23.0 121.5L23.9 121.5L24.2 123.2L23.7 123.9L23.0 122.8ZM-4.0 -6.0L3.0 -6.0L3.0 0.6L3.7 2.1L3.9 4.8L5.1 5.1L5.7 3.6L6.0 1.8L6.9 1.8L7.5 4.2L7.8 8.4L9.0 11.4L10.2 11.1L11.7 9.0L12.0 5.4L11.7 1.8L12.0 -6.0L18.0 -6.0L18.3 1.8L18.0 6.0L18.9 10.2L18.0 13.8L15.6 15.6L12.0 15.3L11.1 16.5L9.0 17.4L8.4 19.8L8.4 25.2L6.0 26.4L3.6 26.7L2.4 28.2L0.0 28.8L-4.0 28.8ZM9.5 18.2L12.5 16.9L15.5 18.5L18.0 21.5L20.2 25.3L19.8 26.6L17.5 25.6L15.5 26.2L13.0 28.0L10.5 28.2L9.0 26.6L9.2 22.0ZM14.8 29.0L17.0 29.2L18.2 30.5L16.0 31.3L14.6 30.2ZM20.6 31.2L21.8 31.4L22.2 33.0L21.2 33.8L20.5 32.5ZM23.8 26.8L25.2 26.7L26.3 27.6L25.5 28.4L24.0 27.8ZM25.6 8.6L27.0 7.5L28.8 8.2L29.1 10.5L27.8 12.0L26.0 11.5ZM25.8 -6.0L27.9 2.4L30.0 4.8L33.0 7.8L33.9 11.4L32.4 14.4L30.6 16.8L30.0 18.3L27.6 19.5L25.2 20.3L24.0 21.9L24.9 23.7L27.6 23.7L30.0 23.5L33.0 25.4L35.4 28.4L37.8 30.2L42.0 32.0L44.4 32.9L46.2 34.4L46.5 33.5L44.7 31.7L42.0 29.0L39.6 26.3L40.5 25.7L43.2 27.8L45.3 30.2L46.5 29.6L47.2 27.2L46.8 23.6L43.8 24.0L42.0 19.8L41.1 16.2L42.0 15.9L44.4 18.0L46.8 20.7L48.6 20.1L50.4 18.0L51.7 15.3L51.5 13.9L49.2 11.7L47.4 10.2L43.8 6.6L42.0 3.6L42.0 -6.0Z"/><path fill="none" stroke="#c7a9cf" stroke-opacity="0.6" stroke-width="0.55" stroke-linejoin="round" d="M-5.0 70.8L-4.1 71.6L-2.3 72.0L0.2 72.6L3.6 73.1L4.2 73.4L6.2 72.6L12.0 76.1L12.9 77.0L14.2 78.0L14.4 78.7L16.0 79.9L16.7 83.9L16.2 85.2L15.0 86.8L15.0 87.5L15.7 88.2L18.0 87.1L21.9 85.7L21.8 84.7L21.5 84.2L25.5 83.8L26.4 82.5L27.2 81.9L29.0 80.6L34.4 80.6L34.5 80.0L35.5 79.7L36.4 78.4L36.4 77.3L36.9 76.6L38.2 74.7L38.7 75.3L39.7 75.0L40.5 75.7L40.5 79.0L41.1 79.9L41.8 80.9M-0.1 140.2L-0.1 139.0L0.6 137.6L2.8 137.6L2.4 136.5L1.1 135.5L1.9 135.5L1.9 134.5L5.0 134.5M5.0 134.5L5.5 134.4L6.4 133.3M5.0 134.5L4.9 137.9L5.4 137.9M6.5 138.2L5.0 139.3L4.6 140.4L3.4 141.6M4.6 140.4L6.0 141.2L7.4 141.5L7.2 142.2M8.0 142.9L9.0 141.6L10.7 141.2L12.2 139.8L15.0 139.4M10.7 146.1L12.4 146.2L14.1 146.4M15.3 150.9L15.4 149.6L16.0 148.7M23.7 152.7L24.6 150.2M33.9 134.2L34.0 132.8L33.9 131.2M34.6 144.9L33.2 146.0L32.0 147.2L31.9 149.1L32.9 150.7L32.7 152.3L33.7 153.0L36.7 153.1L37.8 154.5L41.1 154.4L40.4 157.2L41.3 159.0L40.4 160.0L41.5 160.9L42.1 162.7M42.1 162.7L41.7 161.8L40.2 161.8L37.1 161.9L37.1 162.9L38.2 163.7L36.8 163.8L36.8 165.0L37.8 166.5L36.9 171.7M36.9 171.7L35.7 171.0L36.8 169.2L33.9 168.3L32.0 168.8L30.8 166.8L28.1 164.9L26.4 164.0L24.4 164.0L22.2 162.3M28.1 164.9L27.5 167.3L25.8 169.0L23.2 170.4L22.4 172.4L20.9 172.1L19.5 172.1L20.0 171.2L19.7 170.4M36.9 171.7L32.1 173.3L30.3 177.0L31.9 179.7L33.2 181.4L35.9 180.5L35.9 183.1L37.6 183.0M37.6 183.0L39.1 185.7L38.5 187.6L37.9 189.6L37.5 191.0L38.5 192.0L37.4 194.0L37.7 194.3L36.2 195.8M37.7 194.3L38.6 196.8L39.4 197.6L38.9 199.4L39.8 201.0L40.4 203.8L41.5 203.7M37.6 183.0L38.8 183.1L42.4 181.3L44.6 180.9L44.7 184.0L46.2 185.6L48.3 185.9L48.8 186.5L50.4 187.4L52.7 187.9L53.3 192.1L56.2 192.2L56.2 193.8L57.7 195.5L57.2 197.0L56.6 198.3L56.6 199.0M56.6 199.0L55.0 197.5L50.6 198.1L49.1 202.7M49.1 202.7L48.8 202.3L46.9 202.3L46.3 203.8L44.8 202.4L43.1 201.9L41.5 203.7M41.5 203.7L41.8 204.1L41.3 205.9L39.5 206.8L39.3 210.1L37.4 214.1L36.9 217.8L35.9 220.2L36.7 223.1L37.2 225.5L35.9 227.5L36.2 229.3L34.9 230.5L35.4 234.4M49.1 202.7L51.8 205.5L55.2 207.0L57.5 208.4L55.8 212.0L59.5 212.4L60.6 212.2L62.5 208.8M56.6 199.0L57.1 202.4L60.2 202.8L60.8 205.7L62.5 205.9L63.0 206.0L62.5 208.8M62.5 208.8L63.7 208.9L64.0 211.2L60.6 214.0L57.5 217.5L56.5 221.9L56.2 224.8M57.5 217.5L60.2 218.6L60.8 218.7L63.9 221.2L64.8 222.4L64.5 224.5M42.1 162.7L44.3 163.5L46.7 162.0L46.8 160.5L47.8 161.0L46.5 157.9L48.7 158.7L48.9 158.0L51.8 157.1L52.3 156.0M52.3 156.0L51.2 154.8L51.7 153.5L53.0 152.8L52.3 152.1L53.8 150.8M52.3 156.0L53.5 156.3L54.2 158.1L53.6 160.8L55.2 162.5L56.8 162.2L59.3 161.5M59.3 161.5L58.0 159.1L56.7 157.9L58.1 155.6L58.2 154.7M59.3 161.5L60.3 161.4L62.5 160.9M62.5 160.9L63.5 158.7L62.7 156.4L63.5 155.1M62.5 160.9L65.3 161.0L67.4 158.0M149.7 102.2L150.5 103.4L151.4 108.0L147.4 109.0L147.3 110.6L144.6 112.5L139.0 114.8L139.0 116.7L131.5 116.7M139.0 116.7L139.0 119.8L133.4 119.8L133.4 124.5L131.8 125.3L131.6 128.3L125.1 128.3M139.0 117.4L145.4 121.7L155.3 128.7L155.4 129.5L158.7 131.1L158.9 132.5L160.5 132.2L163.1 131.7L165.8 129.2L173.3 124.4L169.1 119.5L169.8 115.5L169.3 111.8L168.5 108.2L167.2 106.8L165.9 104.6L167.1 103.1L167.7 98.4M169.3 111.8L170.5 109.0L172.6 106.1M195.3 109.1L195.0 113.7L195.0 127.1L195.0 130.7L193.4 130.7L193.4 131.6L180.0 124.5L177.0 126.1L173.3 124.4M195.0 127.1L214.8 127.1M145.4 121.7L142.6 121.7L144.1 138.6L137.9 138.6L135.3 139.3L134.3 138.3L133.0 139.9L131.1 137.5L129.5 136.6L126.3 136.8L125.9 137.6M133.0 139.9L134.4 143.9L130.6 143.5L125.6 144.0M125.4 141.8L128.3 141.5L130.4 142.3L127.8 142.3L125.5 142.8M130.6 143.5L130.6 145.1L128.4 146.4M134.4 143.9L135.7 144.7L138.4 143.8L139.6 146.2L140.1 147.6M131.3 149.6L132.7 148.1L134.8 148.0L135.8 149.6L136.3 150.5L137.6 150.7L138.2 152.7L139.3 152.1L140.7 150.7L140.1 147.6M136.3 150.5L135.8 151.8L134.3 153.1M139.3 152.1L139.6 154.2L141.1 154.9L140.8 157.5M140.1 147.6L143.1 146.8L144.2 147.2L145.6 148.5L148.7 148.6L148.8 151.5L148.0 153.7L148.8 156.2M144.2 147.2L144.7 144.9L146.1 143.4L148.1 141.7L151.7 139.8L153.7 139.5L155.6 138.9L159.2 138.8L160.5 136.8L160.5 132.2M148.7 148.6L148.7 146.3L153.4 146.1L154.9 146.3L157.4 144.7L156.9 143.4L155.0 142.0L153.7 139.5M153.4 146.1L154.1 150.0L154.3 153.1L155.4 154.5M154.9 146.3L156.1 149.6L156.1 154.3M158.0 154.1L157.9 151.3L159.4 147.6L159.4 145.1L157.4 144.7M159.4 145.1L160.2 142.0L164.9 142.9L168.4 143.2L171.2 142.3L176.0 141.7L179.2 136.1L180.0 124.5M167.6 156.8L169.7 153.4L172.2 153.6L173.8 150.7L176.4 146.3L177.7 145.4L176.9 142.7L176.0 141.7M176.9 142.7L178.5 146.3L179.2 148.0L176.6 148.6L179.2 152.2L184.4 151.3L185.2 149.7L189.5 146.9L191.5 146.4L191.0 143.5L189.8 143.3L190.9 140.9L193.4 138.2L193.4 131.6M179.2 152.2L177.5 154.6L177.7 156.4L180.4 161.0L175.5 161.1L172.3 160.9L169.7 160.8M172.3 160.9L172.3 163.0L169.7 163.0M175.5 161.1L177.5 162.5L176.5 165.0L177.5 167.5L174.2 168.5L173.4 170.2L172.0 171.3M180.4 161.0L181.0 158.9L184.4 158.9L183.0 164.4L180.4 168.4L179.9 171.4L177.4 172.9L175.2 172.5L173.4 173.0M184.4 158.9L184.3 157.5L185.7 156.2L190.7 157.9L194.0 156.2L199.0 156.3L195.5 152.4L192.7 150.2L191.5 146.4M192.7 150.2L194.3 149.8L195.2 147.5L197.6 148.8L200.0 149.1L201.7 148.4L203.4 147.5L205.4 148.3L207.3 145.1L208.7 144.2L208.5 146.8L210.2 148.8L211.8 144.9L213.6 143.4L214.1 140.6L215.2 136.0L217.7 134.2M214.2 140.6L216.5 139.6L218.5 140.1L221.3 141.0L224.0 143.8L223.0 146.3L224.9 146.3L225.4 145.5M224.9 146.3L225.0 148.6L226.7 149.7L231.7 151.3L233.3 151.3L228.3 156.4L225.0 157.7L223.2 158.1L221.3 157.6L219.2 159.0L216.8 158.7L213.3 157.3L211.7 155.5L210.0 150.7L210.2 148.8M223.2 158.1L221.7 160.0L221.7 166.1L222.6 167.4M213.3 157.3L210.0 157.7L210.8 158.9L211.7 161.5L210.2 164.0L209.8 166.4L216.0 169.7L216.2 170.5L218.7 172.5M210.0 157.7L207.0 158.7L204.8 158.9L204.6 160.7L205.5 161.1L203.3 163.4L202.7 167.0L201.7 169.3L202.2 172.0M209.8 166.4L204.2 166.4L202.7 167.0M199.0 156.3L202.5 157.4L204.8 158.9M204.2 166.4L204.8 168.6L201.7 169.3M204.8 168.6L204.0 171.0L202.4 172.1M204.6 178.4L208.2 180.4L210.0 180.6M211.6 184.1L215.8 184.3L217.5 183.8L220.7 182.3M211.0 187.4L213.2 189.8L213.0 191.7L212.2 193.6L210.7 191.7L210.5 188.9L208.7 188.2L208.3 185.7L208.8 182.8L208.2 180.4M208.7 188.2L203.7 190.0L204.0 191.0M204.6 178.4L201.5 178.9L200.7 180.1L201.1 182.6L200.6 184.7L203.0 185.1L203.0 187.3L200.7 185.7L198.7 184.1L195.5 183.5L194.0 183.9L193.4 183.0L193.4 186.5L190.0 186.5L190.0 192.0L192.4 194.5L195.4 194.8L198.4 195.1L201.5 191.6L204.0 191.0L205.5 191.7L208.3 192.9L208.0 195.2L208.3 196.9L207.5 201.0L205.5 203.0L202.3 202.6L199.5 199.6L197.0 197.8L195.4 194.8M195.4 194.8L192.7 196.0L188.4 195.7L188.4 202.3L186.7 202.3L186.7 207.3L187.9 211.1L191.2 208.6L195.9 209.0L198.2 205.3L202.3 202.6M186.7 207.3L186.7 214.1L182.4 214.6L180.9 214.4M173.0 193.9L177.0 194.1L184.0 194.1L189.0 195.0L192.4 194.5M173.7 174.5L175.0 174.5L181.0 174.5L182.7 178.2L185.7 178.1L186.5 176.4L189.7 176.9L189.9 180.8L190.5 183.5L193.4 183.0M205.5 203.0L206.6 206.6L206.6 209.5L205.0 209.1L204.7 211.0L206.5 212.0L206.8 211.0L206.6 209.5M206.8 211.0L208.2 211.1M198.4 216.3L200.2 214.6L202.2 215.4L202.4 216.9L200.2 218.4L199.0 217.7L198.4 216.3M187.6 3.6L186.7 6.6L183.5 6.2L183.2 8.7L180.7 11.9L179.0 15.7L177.5 16.6L177.7 17.8L176.0 22.5L176.9 24.1L173.5 26.4L173.7 35.7L174.4 35.5L174.2 38.7L173.0 39.7L172.5 42.7M187.6 3.6L188.4 3.9L192.8 8.7L192.4 11.9L193.2 16.4L193.6 17.8M187.6 3.6L188.9 2.5L190.6 5.3L195.0 5.7L196.3 2.5L196.7 0.6L200.0 -1.1L202.2 2.5L201.6 3.7L203.5 1.1L204.8 0.1M201.6 3.7L200.8 6.2L203.2 9.8L201.8 13.2L203.5 18.2L202.9 21.8L204.3 24.5L206.0 29.0L199.7 37.2M200.2 41.0L199.0 43.0L199.3 46.2L199.3 46.9L199.8 49.1L200.4 51.2L204.8 52.8L204.7 55.2L207.8 59.1L206.3 62.7M199.3 46.9L196.7 46.0L195.5 45.5L193.9 45.9M200.4 51.2L197.7 52.6L195.0 50.7L190.2 50.4L188.4 51.4M197.7 52.6L196.4 54.9L195.9 56.6L192.5 57.6L191.4 56.4L191.0 54.7L188.8 53.9M191.4 56.4L186.1 56.2M192.5 57.6L193.2 61.1L192.7 64.3L193.5 66.1L191.2 69.4L190.9 70.6L186.9 70.1L184.8 69.6L181.5 67.1L178.4 65.9L178.1 66.0L177.7 61.4L177.0 57.7M178.1 66.0L173.5 67.5L176.4 71.4L174.6 74.1L170.9 74.5L169.3 74.5L166.1 74.4L167.1 70.9L164.0 69.6L163.6 68.0L163.4 66.3L163.2 65.5L163.7 63.4L164.7 63.1L165.1 62.3L165.4 59.6M167.8 54.9L169.1 55.1M163.4 66.3L161.7 64.5L159.0 64.7M157.6 65.5L160.3 68.3L163.1 69.4L164.0 69.6M166.1 74.4L163.6 77.8L164.7 78.6L165.1 78.4L164.5 80.4L165.1 82.4L165.9 83.5M165.1 78.4L167.5 77.6L168.4 78.6L170.8 76.2L169.3 74.5M170.8 76.2L173.7 75.7L176.2 77.0L176.0 79.2M176.2 77.0L180.2 76.2L182.0 73.4L181.6 71.9L178.4 70.8L176.4 71.4M181.6 71.9L184.8 69.6M182.0 73.4L184.7 73.9L187.5 72.1L190.3 72.4L190.9 70.6M190.3 72.4L191.5 73.4L188.4 77.6L187.1 78.0L184.9 78.4L181.0 77.1L180.2 76.2M181.0 77.1L178.9 79.6L176.0 79.5M179.6 80.1L181.5 80.0L185.0 81.0L184.9 78.4M179.6 80.1L180.0 82.5L182.7 85.2L184.2 86.5M185.0 81.0L185.6 83.0L185.4 84.1L184.2 86.5M185.4 84.1L187.3 85.6L189.6 85.9L189.3 86.9L187.7 87.7L186.8 86.3L187.3 85.6M186.8 86.3L185.7 87.8M187.1 78.0L189.2 80.3L191.1 82.5L190.6 86.8L189.3 86.9M187.7 87.7L187.5 89.2L188.4 90.1L186.7 92.6M188.4 90.1L191.5 89.0L190.6 86.8M191.5 89.0L194.2 88.5L197.3 88.2L200.0 87.5M197.3 88.2L196.8 90.3M191.1 82.5L191.6 83.4L195.9 83.8L198.8 82.7L200.9 83.5M191.5 73.4L194.9 74.0L197.7 72.7L200.2 76.1L200.4 79.5L202.8 79.8M197.7 72.7L201.9 73.5L203.5 77.3L200.4 79.5M192.7 64.3L195.9 63.3L204.3 64.9L206.3 62.7L210.7 65.0L212.7 67.4L216.7 68.5L220.2 69.3L219.5 73.7L217.1 75.6M138.7 87.8L142.4 87.6L143.1 88.5L141.9 89.7L141.7 92.6L140.9 92.7L141.7 95.8L140.9 97.2L141.1 97.9M150.4 84.4L154.6 85.9L156.3 86.4L158.6 86.5M141.3 54.4L139.8 56.2L141.2 57.0L143.0 57.2M220.0 84.3L225.0 85.0L230.8 87.7L231.2 87.8L232.2 89.1L234.2 87.8M222.6 88.6L225.7 89.5L228.3 89.2L231.2 89.1L231.2 87.8M225.7 89.5L226.1 91.7L228.0 92.6L226.7 93.2L227.5 95.6L228.0 98.0L223.9 98.1L220.0 98.7L216.7 98.6L214.4 99.9L213.6 100.7M228.3 89.2L229.3 90.2L230.8 92.9L230.9 94.4M228.0 92.6L230.9 94.4L233.3 92.6L234.8 95.3M223.9 98.1L222.0 102.9L218.0 105.7L214.7 107.8L212.9 107.0L212.6 109.4L211.7 113.2M213.3 103.1L214.3 104.0L213.1 105.6L211.8 106.2M211.5 113.3L210.4 110.0M211.7 113.5L213.5 113.8L215.8 112.3L216.7 111.3L215.0 109.4L218.3 108.4L218.7 108.1L218.0 105.7M218.7 108.1L220.7 108.6L223.5 110.2L227.8 113.8L230.9 114.0L232.8 112.1L233.3 112.3M230.9 114.0L232.4 114.2L234.0 115.1M228.0 98.0L229.0 100.4L230.2 101.0L229.0 104.4L230.3 105.9L233.1 108.8L232.8 110.4L234.2 112.4M224.7 137.0L225.3 135.3L227.3 135.3L231.7 136.0L233.7 133.9L240.0 132.5L245.0 130.7L246.1 127.1L245.3 125.9L240.9 125.4L239.3 123.3M240.0 132.5L241.8 136.6M246.1 127.1L246.6 123.3L247.2 121.8M243.1 97.6L244.6 97.4L248.6 95.7L252.1 97.3L255.2 99.0L255.4 101.2L254.2 104.0L254.7 108.0L256.4 110.3L254.7 112.6L257.5 115.3L258.8 117.6L258.6 118.6L256.0 121.3M254.7 112.6L257.5 113.4L263.9 112.6L264.5 110.0L268.8 108.6L269.9 105.4L271.8 104.2L272.7 101.5L271.9 100.2L274.3 98.6L277.5 98.2M255.4 101.2L258.3 101.5L260.8 99.8L264.2 97.5L266.3 97.9L268.8 98.1L270.3 97.0L272.4 95.6L272.6 98.8L275.4 97.4L278.1 97.8L277.5 98.2M264.2 97.5L260.6 94.2L257.3 91.9L255.0 89.3L253.5 88.8L253.3 87.1L251.0 85.9L248.3 89.1L246.6 89.1L245.6 89.1L244.5 87.4L240.7 88.1M246.6 89.1L246.6 80.6L250.9 79.3L255.1 82.3L261.5 83.6L263.5 85.2L263.3 87.5L266.8 89.7L271.5 86.9L275.8 86.5L277.1 84.8L279.6 85.5L285.3 85.8L287.0 87.1L286.9 81.1L290.8 80.1L290.4 75.3L295.8 75.7L298.8 70.6M287.0 87.1L283.3 89.6L279.9 91.0L276.3 92.2L276.0 93.1L278.1 95.3L278.1 97.8M276.0 93.1L272.9 93.1L270.8 92.8L268.8 91.5L270.8 89.8L271.5 86.9M266.3 97.9L266.6 94.3L268.0 91.8L270.8 89.8M246.1 66.8L240.8 64.3L238.0 63.7L234.5 66.7L231.3 72.4L231.8 73.9L233.7 74.1L235.0 77.3M267.9 123.0L271.8 122.2L269.9 118.7L269.1 118.0L271.1 116.1L274.8 114.2L275.6 112.4L277.6 110.3L277.6 107.4L278.9 107.8L276.6 106.0L276.6 103.0L281.3 101.1L282.9 101.4M277.5 98.2L279.8 100.4L282.9 101.4M282.9 101.4L283.9 103.2L284.9 107.6L284.5 109.8L288.3 111.8L286.8 114.6L292.1 117.3L294.9 118.7L300.1 119.1L300.1 116.3M288.3 111.8L290.1 111.7L293.4 114.4L296.6 116.1L300.1 116.3L301.4 117.4M301.4 117.4L302.9 115.7L306.1 116.5L306.7 118.3L303.0 118.5L301.4 117.4M306.1 116.5L309.9 114.2L313.2 113.4L315.5 115.6M315.5 115.6L313.6 117.4L311.7 119.8L310.9 121.7L310.2 123.8L308.7 125.3L308.6 126.8L307.6 127.2L306.9 128.4L307.2 129.5M307.6 127.2L306.5 124.1L305.2 124.4L305.2 123.3L307.2 121.7L303.0 121.1L302.9 119.3L300.6 118.8L300.1 120.2L301.5 121.3L300.1 122.4L301.2 123.2L301.6 127.1M315.5 115.6L317.7 116.9L317.7 120.1L315.8 122.1L315.8 123.6L318.1 125.0L319.1 125.5L318.6 126.9L320.1 128.1L321.8 127.9L320.1 130.1M320.1 130.1L316.6 131.1L316.1 133.3L317.6 137.5L316.9 139.3L318.6 142.5L319.3 144.9L317.8 147.4M320.1 130.1L320.8 131.6L322.0 131.4L321.7 135.1L323.4 133.9L325.6 133.4L327.8 135.3L327.8 137.0L329.2 138.4L328.6 140.6L324.9 140.7L323.8 141.9L324.7 145.2M328.6 140.6L329.9 141.2L332.5 140.0L332.4 138.4L331.1 136.9L328.6 133.5L326.4 131.9L328.2 130.7L327.6 129.5L324.9 129.2L323.5 126.4M321.8 127.9L322.9 128.6L322.8 126.2L323.5 126.4L326.4 126.1L328.8 124.8L331.1 125.6L330.9 127.1L333.3 127.9M332.5 140.0L332.6 143.7L329.9 145.0L329.6 146.3L327.3 147.3M320.1 153.9L321.7 155.3L323.4 154.3M336.0 161.3L337.4 163.3L340.2 162.3L344.0 162.3L346.0 157.7L349.2 157.7M388.2 169.0L388.2 179.9M299.6 70.4L304.7 80.1L312.2 82.3L313.9 85.8L322.9 86.4L328.2 88.4L337.2 85.8L339.8 83.6L339.7 80.5L346.0 79.6L347.7 77.4L352.7 76.6L349.5 73.4L345.9 73.6L347.7 68.7M337.7 70.5L343.7 67.6L347.7 68.7L349.5 69.6L351.9 68.0L353.4 63.9L354.4 61.5L355.2 59.4L359.2 58.7L362.5 60.1L365.7 67.8L365.9 68.8L370.8 71.2L371.4 74.1L374.0 74.1L377.8 72.5L376.5 75.1L375.0 80.4L372.9 79.9L372.0 84.1L370.9 86.6M370.9 86.6L369.4 86.5L366.6 87.5L364.7 88.0L363.2 89.9L360.4 91.9M364.4 96.6L365.7 95.6L367.1 94.9"/><path fill="#aad3df" d="M201.9 89.3L200.0 87.7L199.2 86.4L199.9 84.8L201.1 82.5L202.9 80.1L204.6 77.0L205.8 76.8L206.7 77.5L208.3 78.0L209.3 78.5L207.5 79.8L208.9 80.1L209.2 81.6L209.6 82.0L210.3 81.8L212.3 80.6L214.2 79.9L213.3 79.6L211.7 79.0L211.3 77.8L212.2 77.4L214.7 76.4L215.9 75.6L218.2 75.3L218.8 75.6L217.2 76.6L216.9 78.1L215.7 79.9L214.5 80.1L215.5 80.9L216.3 81.3L218.5 82.7L219.5 83.9L221.7 85.2L222.7 87.2L222.7 88.3L220.8 89.6L219.5 89.7L217.3 89.8L215.5 89.5L213.9 89.1L211.9 87.4L209.6 87.6L206.3 88.7L203.8 89.3ZM198.4 90.6L200.0 89.7L202.4 90.2L201.7 91.0L199.2 91.2ZM232.5 79.0L234.2 77.5L236.7 76.6L239.1 75.8L241.3 76.1L242.0 77.5L241.6 79.9L238.8 79.9L238.1 81.6L237.1 81.8L238.6 83.8L238.8 84.9L240.8 85.7L241.5 88.4L244.3 87.5L244.3 89.9L241.5 89.9L241.6 91.9L241.1 93.2L243.1 94.3L243.0 97.5L243.3 98.5L240.0 99.1L238.3 98.9L236.5 97.4L234.8 95.4L234.8 94.6L235.5 93.4L237.2 91.2L235.8 90.6L235.0 89.1L233.8 87.4L232.6 85.4L232.3 83.6L231.3 81.6L231.7 80.6ZM0.1 76.4L4.9 72.4L6.5 71.0L9.4 71.5L11.9 73.4L12.7 77.0L11.9 76.4L7.9 76.9L7.2 74.7L6.0 75.8L2.1 76.8ZM7.5 88.3L8.5 88.3L9.7 86.4L9.6 84.7L9.4 83.0L10.2 80.9L11.0 80.1L11.9 78.8L12.3 78.7L11.0 78.1L9.4 78.5L8.5 78.8L6.9 81.7L8.6 79.9L7.7 82.0L7.0 85.1ZM12.4 78.7L14.4 78.0L16.9 78.0L17.7 78.4L18.7 78.5L20.0 79.8L20.4 81.2L19.9 81.8L18.6 81.6L17.5 80.0L18.0 81.6L17.4 83.5L16.2 85.2L16.0 83.9L15.3 82.8L13.7 83.8L14.5 82.3L14.5 80.5L13.9 79.6L12.8 79.1ZM14.5 88.2L15.0 87.4L16.0 87.6L18.2 86.0L20.0 86.3L21.4 85.5L22.0 85.6L20.0 87.2L17.4 88.6L15.7 88.7ZM20.5 84.6L21.2 83.8L23.5 83.1L25.2 83.2L26.0 82.5L26.5 84.0L24.2 84.7L21.8 84.6ZM206.2 166.0L206.7 164.4L208.3 164.0L210.0 164.2L210.2 165.2L211.3 165.2L210.2 166.4L209.8 167.7L208.8 168.7L208.0 168.9L206.7 169.0L206.3 167.5ZM202.2 170.3L202.9 172.2L202.7 174.0L203.7 176.2L204.7 178.4L205.3 179.2L204.3 179.1L202.7 176.4L201.9 174.5L201.9 172.0ZM209.9 180.6L211.0 182.3L211.0 184.5L211.7 186.2L212.1 188.8L211.2 188.6L210.7 186.2L210.2 184.0L210.3 182.1ZM203.4 37.0L205.0 35.2L206.7 33.6L208.2 35.0L208.0 37.4L206.7 38.4L205.2 39.2L205.0 38.7ZM210.5 35.0L211.7 31.1L212.5 30.0L213.3 33.2L214.0 35.3L212.3 35.9ZM174.0 42.7L175.4 41.4L176.7 42.0L176.2 43.6L174.7 44.3ZM326.2 64.3L327.9 63.7L329.9 61.6L332.9 59.7L334.9 56.3L336.4 52.5L335.4 52.5L334.2 56.0L332.1 59.1L329.1 61.4L327.1 63.0ZM275.6 79.9L276.9 78.2L279.1 76.8L282.4 76.8L285.3 77.0L284.4 77.8L281.6 77.5L279.1 77.8L277.3 79.9L276.4 80.9ZM253.0 77.5L254.3 76.4L256.0 77.0L255.0 78.2L253.6 78.0ZM250.3 83.0L250.6 80.6L251.5 78.7L252.1 79.2L251.5 81.6L251.0 83.6ZM34.2 146.4L34.9 147.3L35.2 148.5L34.5 149.5L33.5 149.0L33.5 147.6ZM10.4 144.7L11.2 144.4L12.2 145.9L11.5 146.2L10.7 145.6ZM36.9 190.7L37.8 190.7L38.8 192.0L38.7 192.7L37.5 192.0ZM68.2 217.3L69.2 217.9L68.2 219.6L66.7 221.0L66.7 220.2L67.7 218.8ZM176.5 142.2L177.7 142.2L178.0 143.2L177.0 143.4ZM213.2 157.2L213.8 157.5L214.5 159.7L214.2 160.5L213.5 159.2ZM280.3 86.6L282.1 85.8L283.8 86.2L282.4 87.2L280.9 87.1ZM326.1 142.5L326.7 142.7L327.7 143.9L327.1 143.7ZM228.5 96.0L229.2 95.8L229.7 97.5L229.0 97.9ZM224.0 95.1L225.5 94.2L225.8 95.1L224.8 95.6ZM35.4 14.0L37.0 13.5L38.4 14.5L38.0 16.3L36.0 16.3ZM34.6 20.8L35.8 20.4L36.6 21.8L35.5 22.8L34.6 22.0Z"/><g fill="#aad3df" fill-opacity="0.75"><circle cx="26.8" cy="58.8" r="0.7"/><circle cx="26.2" cy="62.4" r="0.7"/><circle cx="37.6" cy="56.4" r="0.7"/><circle cx="46.6" cy="57.6" r="0.7"/><circle cx="54.4" cy="58.8" r="0.7"/><circle cx="31.6" cy="66.0" r="0.7"/><circle cx="40.0" cy="65.4" r="0.7"/><circle cx="21.4" cy="72.0" r="0.7"/><circle cx="29.2" cy="72.0" r="0.7"/><circle cx="34.0" cy="72.6" r="0.7"/><circle cx="7.0" cy="69.0" r="0.7"/><circle cx="4.6" cy="58.2" r="0.7"/><circle cx="24.5" cy="40.0" r="0.7"/><circle cx="28.0" cy="48.0" r="0.7"/><circle cx="33.0" cy="44.0" r="0.7"/><circle cx="38.0" cy="50.0" r="0.7"/><circle cx="18.0" cy="64.0" r="0.7"/></g><path fill="none" stroke="#aad3df" stroke-width="0.7" d="M26.0 82.5 L28.5 80.9 L30.9 79.4 L32.7 77.5 L34.9 76.3"/></svg>
<svg class="abs" style="left:0;top:0" width="412" height="234" viewBox="0 0 412 234" font-family="Liberation Sans, sans-serif" font-size="8.2" font-weight="bold" text-anchor="middle"><defs><radialGradient id="gg"><stop offset="0" stop-color="#00e400" stop-opacity="0.86"/><stop offset="0.78" stop-color="#00e400" stop-opacity="0.84"/><stop offset="0.93" stop-color="#00e400" stop-opacity="0.62"/><stop offset="1" stop-color="#00e400" stop-opacity="0.15"/></radialGradient><radialGradient id="gy"><stop offset="0" stop-color="#ffff00" stop-opacity="0.86"/><stop offset="0.78" stop-color="#ffff00" stop-opacity="0.84"/><stop offset="0.93" stop-color="#ffff00" stop-opacity="0.62"/><stop offset="1" stop-color="#ffff00" stop-opacity="0.15"/></radialGradient><radialGradient id="go"><stop offset="0" stop-color="#ff7e00" stop-opacity="0.86"/><stop offset="0.78" stop-color="#ff7e00" stop-opacity="0.84"/><stop offset="0.93" stop-color="#ff7e00" stop-opacity="0.62"/><stop offset="1" stop-color="#ff7e00" stop-opacity="0.15"/></radialGradient><radialGradient id="gr"><stop offset="0" stop-color="#ff0000" stop-opacity="0.86"/><stop offset="0.78" stop-color="#ff0000" stop-opacity="0.84"/><stop offset="0.93" stop-color="#ff0000" stop-opacity="0.62"/><stop offset="1" stop-color="#ff0000" stop-opacity="0.15"/></radialGradient><radialGradient id="gp"><stop offset="0" stop-color="#92106a" stop-opacity="0.86"/><stop offset="0.78" stop-color="#92106a" stop-opacity="0.84"/><stop offset="0.93" stop-color="#92106a" stop-opacity="0.62"/><stop offset="1" stop-color="#92106a" stop-opacity="0.15"/></radialGradient><radialGradient id="gm"><stop offset="0" stop-color="#651f47" stop-opacity="0.86"/><stop offset="0.78" stop-color="#651f47" stop-opacity="0.84"/><stop offset="0.93" stop-color="#651f47" stop-opacity="0.62"/><stop offset="1" stop-color="#651f47" stop-opacity="0.15"/></radialGradient><radialGradient id="gn"><stop offset="0" stop-color="#999999" stop-opacity="0.86"/><stop offset="0.78" stop-color="#999999" stop-opacity="0.84"/><stop offset="0.93" stop-color="#999999" stop-opacity="0.62"/><stop offset="1" stop-color="#999999" stop-opacity="0.15"/></radialGradient></defs><circle cx="273.9" cy="65.9" r="9.0" fill="url(#gg)"/><circle cx="3.1" cy="139.4" r="9.0" fill="url(#gg)"/><circle cx="14.3" cy="148.4" r="9.0" fill="url(#gg)"/><circle cx="39.5" cy="145.5" r="9.0" fill="url(#gg)"/><circle cx="31.1" cy="157.8" r="9.0" fill="url(#gy)"/><circle cx="26.2" cy="185.7" r="9.0" fill="url(#gy)"/><circle cx="56.6" cy="225.5" r="9.0" fill="url(#gn)"/><circle cx="185.7" cy="83.0" r="9.0" fill="url(#gy)"/><circle cx="189.5" cy="86.8" r="9.0" fill="url(#gn)"/><circle cx="159.1" cy="99.3" r="9.0" fill="url(#gy)"/><circle cx="130.9" cy="148.9" r="9.0" fill="url(#gy)"/><circle cx="141.2" cy="144.6" r="9.0" fill="url(#gr)"/><circle cx="147.2" cy="156.5" r="9.0" fill="url(#gy)"/><circle cx="154.5" cy="156.4" r="9.0" fill="url(#gy)"/><circle cx="179.3" cy="145.3" r="9.0" fill="url(#gr)"/><circle cx="207.8" cy="139.3" r="9.0" fill="url(#gg)"/><circle cx="216.8" cy="149.9" r="9.0" fill="url(#gy)"/><circle cx="218.4" cy="149.9" r="9.0" fill="url(#gy)"/><circle cx="207.8" cy="164.4" r="9.0" fill="url(#gy)"/><circle cx="213.4" cy="108.9" r="9.0" fill="url(#gn)"/><circle cx="228.1" cy="105.8" r="9.0" fill="url(#gy)"/><circle cx="233.7" cy="113.5" r="9.0" fill="url(#gy)"/><circle cx="219.2" cy="128.5" r="9.0" fill="url(#gy)"/><circle cx="238.6" cy="121.7" r="9.0" fill="url(#go)"/><circle cx="242.2" cy="122.5" r="9.0" fill="url(#gy)"/><circle cx="230.7" cy="122.0" r="9.0" fill="url(#gn)"/><circle cx="247.0" cy="121.3" r="9.0" fill="url(#gn)"/><circle cx="250.1" cy="96.7" r="9.0" fill="url(#gy)"/><circle cx="277.8" cy="85.8" r="9.0" fill="url(#gn)"/><circle cx="268.7" cy="88.8" r="9.0" fill="url(#gy)"/><circle cx="282.6" cy="85.3" r="9.0" fill="url(#gy)"/><circle cx="268.5" cy="96.0" r="9.0" fill="url(#gr)"/><circle cx="277.5" cy="110.0" r="9.0" fill="url(#gp)"/><circle cx="266.7" cy="104.2" r="9.0" fill="url(#gr)"/><circle cx="276.1" cy="105.1" r="9.0" fill="url(#gr)"/><circle cx="282.7" cy="115.8" r="9.0" fill="url(#gm)"/><circle cx="295.8" cy="117.1" r="9.0" fill="url(#gr)"/><circle cx="265.7" cy="122.7" r="9.0" fill="url(#gp)"/><circle cx="300.9" cy="126.7" r="9.0" fill="url(#gn)"/><circle cx="304.7" cy="124.9" r="9.0" fill="url(#gr)"/><circle cx="285.0" cy="135.5" r="9.0" fill="url(#gr)"/><circle cx="275.2" cy="132.5" r="9.0" fill="url(#gr)"/><circle cx="287.6" cy="143.5" r="9.0" fill="url(#gy)"/><circle cx="286.9" cy="154.0" r="9.0" fill="url(#go)"/><circle cx="313.8" cy="136.4" r="9.0" fill="url(#gy)"/><circle cx="330.6" cy="129.2" r="9.0" fill="url(#gy)"/><circle cx="324.2" cy="134.9" r="9.0" fill="url(#gy)"/><circle cx="342.5" cy="126.1" r="9.0" fill="url(#gy)"/><circle cx="331.3" cy="147.5" r="9.0" fill="url(#gy)"/><circle cx="331.3" cy="176.0" r="9.0" fill="url(#go)"/><circle cx="355.6" cy="110.7" r="9.0" fill="url(#gr)"/><circle cx="347.4" cy="93.0" r="9.0" fill="url(#gy)"/><circle cx="359.3" cy="88.8" r="9.0" fill="url(#gr)"/><circle cx="332.0" cy="74.8" r="9.0" fill="url(#gr)"/><text transform="translate(3.1 142.3) scale(0.82 1)" fill="#111" stroke="#fff" stroke-width="1.7" stroke-linejoin="round" paint-order="stroke">41</text><text transform="translate(14.3 151.3) scale(0.82 1)" fill="#111" stroke="#fff" stroke-width="1.7" stroke-linejoin="round" paint-order="stroke">29</text><text transform="translate(39.5 148.4) scale(0.82 1)" fill="#111" stroke="#fff" stroke-width="1.7" stroke-linejoin="round" paint-order="stroke">37</text><text transform="translate(31.1 160.7) scale(0.82 1)" fill="#111" stroke="#fff" stroke-width="1.7" stroke-linejoin="round" paint-order="stroke">52</text><text transform="translate(26.2 188.6) scale(0.82 1)" fill="#111" stroke="#fff" stroke-width="1.7" stroke-linejoin="round" paint-order="stroke">72</text><text transform="translate(56.6 228.4) scale(0.82 1)" fill="#111" stroke="#fff" stroke-width="1.7" stroke-linejoin="round" paint-order="stroke">N/A</text><text transform="translate(185.7 85.9) scale(0.82 1)" fill="#111" stroke="#fff" stroke-width="1.7" stroke-linejoin="round" paint-order="stroke">56</text><text transform="translate(189.5 89.7) scale(0.82 1)" fill="#111" stroke="#fff" stroke-width="1.7" stroke-linejoin="round" paint-order="stroke">N/A</text><text transform="translate(159.1 102.2) scale(0.82 1)" fill="#111" stroke="#fff" stroke-width="1.7" stroke-linejoin="round" paint-order="stroke">83</text><text transform="translate(130.9 151.8) scale(0.82 1)" fill="#111" stroke="#fff" stroke-width="1.7" stroke-linejoin="round" paint-order="stroke">55</text><text transform="translate(141.2 147.5) scale(0.82 1)" fill="#111" stroke="#fff" stroke-width="1.7" stroke-linejoin="round" paint-order="stroke">170</text><text transform="translate(147.2 159.4) scale(0.82 1)" fill="#111" stroke="#fff" stroke-width="1.7" stroke-linejoin="round" paint-order="stroke">85</text><text transform="translate(154.5 159.3) scale(0.82 1)" fill="#111" stroke="#fff" stroke-width="1.7" stroke-linejoin="round" paint-order="stroke">70</text><text transform="translate(179.3 148.2) scale(0.82 1)" fill="#111" stroke="#fff" stroke-width="1.7" stroke-linejoin="round" paint-order="stroke">170</text><text transform="translate(207.8 142.2) scale(0.82 1)" fill="#111" stroke="#fff" stroke-width="1.7" stroke-linejoin="round" paint-order="stroke">37</text><text transform="translate(216.8 152.8) scale(0.82 1)" fill="#111" stroke="#fff" stroke-width="1.7" stroke-linejoin="round" paint-order="stroke">63</text><text transform="translate(218.4 152.8) scale(0.82 1)" fill="#111" stroke="#fff" stroke-width="1.7" stroke-linejoin="round" paint-order="stroke">53</text><text transform="translate(207.8 167.3) scale(0.82 1)" fill="#111" stroke="#fff" stroke-width="1.7" stroke-linejoin="round" paint-order="stroke">95</text><text transform="translate(213.4 111.8) scale(0.82 1)" fill="#111" stroke="#fff" stroke-width="1.7" stroke-linejoin="round" paint-order="stroke">N/A</text><text transform="translate(228.1 108.7) scale(0.82 1)" fill="#111" stroke="#fff" stroke-width="1.7" stroke-linejoin="round" paint-order="stroke">54</text><text transform="translate(233.7 116.4) scale(0.82 1)" fill="#111" stroke="#fff" stroke-width="1.7" stroke-linejoin="round" paint-order="stroke">95</text><text transform="translate(219.2 131.4) scale(0.82 1)" fill="#111" stroke="#fff" stroke-width="1.7" stroke-linejoin="round" paint-order="stroke">68</text><text transform="translate(230.7 124.9) scale(0.82 1)" fill="#111" stroke="#fff" stroke-width="1.7" stroke-linejoin="round" paint-order="stroke">N/A</text><text transform="translate(247.0 124.2) scale(0.82 1)" fill="#111" stroke="#fff" stroke-width="1.7" stroke-linejoin="round" paint-order="stroke">N/A</text><text transform="translate(250.1 99.6) scale(0.82 1)" fill="#111" stroke="#fff" stroke-width="1.7" stroke-linejoin="round" paint-order="stroke">72</text><text transform="translate(268.7 91.7) scale(0.82 1)" fill="#111" stroke="#fff" stroke-width="1.7" stroke-linejoin="round" paint-order="stroke">83</text><text transform="translate(268.5 98.9) scale(0.82 1)" fill="#111" stroke="#fff" stroke-width="1.7" stroke-linejoin="round" paint-order="stroke">153</text><text transform="translate(277.5 112.9) scale(0.82 1)" fill="#111" stroke="#fff" stroke-width="1.7" stroke-linejoin="round" paint-order="stroke">262</text><text transform="translate(266.7 107.1) scale(0.82 1)" fill="#111" stroke="#fff" stroke-width="1.7" stroke-linejoin="round" paint-order="stroke">173</text><text transform="translate(276.1 108.0) scale(0.82 1)" fill="#111" stroke="#fff" stroke-width="1.7" stroke-linejoin="round" paint-order="stroke">166</text><text transform="translate(282.7 118.7) scale(0.82 1)" fill="#111" stroke="#fff" stroke-width="1.7" stroke-linejoin="round" paint-order="stroke">301</text><text transform="translate(295.8 120.0) scale(0.82 1)" fill="#111" stroke="#fff" stroke-width="1.7" stroke-linejoin="round" paint-order="stroke">158</text><text transform="translate(265.7 125.6) scale(0.82 1)" fill="#111" stroke="#fff" stroke-width="1.7" stroke-linejoin="round" paint-order="stroke">215</text><text transform="translate(300.9 129.6) scale(0.82 1)" fill="#111" stroke="#fff" stroke-width="1.7" stroke-linejoin="round" paint-order="stroke">N/A</text><text transform="translate(304.7 127.8) scale(0.82 1)" fill="#111" stroke="#fff" stroke-width="1.7" stroke-linejoin="round" paint-order="stroke">190</text><text transform="translate(285.0 138.4) scale(0.82 1)" fill="#111" stroke="#fff" stroke-width="1.7" stroke-linejoin="round" paint-order="stroke">168</text><text transform="translate(275.2 135.4) scale(0.82 1)" fill="#111" stroke="#fff" stroke-width="1.7" stroke-linejoin="round" paint-order="stroke">159</text><text transform="translate(287.6 146.4) scale(0.82 1)" fill="#111" stroke="#fff" stroke-width="1.7" stroke-linejoin="round" paint-order="stroke">74</text><text transform="translate(286.9 156.9) scale(0.82 1)" fill="#111" stroke="#fff" stroke-width="1.7" stroke-linejoin="round" paint-order="stroke">118</text><text transform="translate(313.8 139.3) scale(0.82 1)" fill="#111" stroke="#fff" stroke-width="1.7" stroke-linejoin="round" paint-order="stroke">65</text><text transform="translate(330.6 132.1) scale(0.82 1)" fill="#111" stroke="#fff" stroke-width="1.7" stroke-linejoin="round" paint-order="stroke">75</text><text transform="translate(324.2 137.8) scale(0.82 1)" fill="#111" stroke="#fff" stroke-width="1.7" stroke-linejoin="round" paint-order="stroke">97</text><text transform="translate(342.5 129.0) scale(0.82 1)" fill="#111" stroke="#fff" stroke-width="1.7" stroke-linejoin="round" paint-order="stroke">99</text><text transform="translate(331.3 150.4) scale(0.82 1)" fill="#111" stroke="#fff" stroke-width="1.7" stroke-linejoin="round" paint-order="stroke">75</text><text transform="translate(331.3 178.9) scale(0.82 1)" fill="#111" stroke="#fff" stroke-width="1.7" stroke-linejoin="round" paint-order="stroke">143</text><text transform="translate(355.6 113.6) scale(0.82 1)" fill="#111" stroke="#fff" stroke-width="1.7" stroke-linejoin="round" paint-order="stroke">161</text><text transform="translate(347.4 95.9) scale(0.82 1)" fill="#111" stroke="#fff" stroke-width="1.7" stroke-linejoin="round" paint-order="stroke">90</text><text transform="translate(359.3 91.7) scale(0.82 1)" fill="#111" stroke="#fff" stroke-width="1.7" stroke-linejoin="round" paint-order="stroke">154</text><text transform="translate(332.0 77.7) scale(0.82 1)" fill="#111" stroke="#fff" stroke-width="1.7" stroke-linejoin="round" paint-order="stroke">153</text><text transform="translate(277.8 88.7) scale(0.82 1)" fill="#111" stroke="#fff" stroke-width="1.7" stroke-linejoin="round" paint-order="stroke">N/A</text><text transform="translate(282.6 88.2) scale(0.82 1)" fill="#111" stroke="#fff" stroke-width="1.7" stroke-linejoin="round" paint-order="stroke">68</text><text transform="translate(238.6 124.6) scale(0.82 1)" fill="#111" stroke="#fff" stroke-width="1.7" stroke-linejoin="round" paint-order="stroke">114</text></svg>
<div class="abs" id="pop" style="left:249px;top:-9px;width:93.5px;height:81px;background:#fff;border:1px solid #ddd;border-radius:5px;box-shadow:0 1px 3px rgba(0,0,0,0.25)">
  <div style="position:absolute;left:0;top:13px;width:100%;text-align:center;font-size:8.2px;line-height:8.56px;color:#333">Bishkek<br>2020-11-07 9:00 AM<br>(LT)</div>
  <table style="position:absolute;left:8px;top:37.3px;width:76px;height:33.3px;border-collapse:collapse;border:1px solid #024985;font-size:8.3px;text-align:center">
    <tr style="background:#024985;color:#fff;font-weight:bold;height:16px"><td style="width:47px">Pollutant</td><td>AQI</td></tr>
    <tr style="height:16.8px;color:#333"><td style="border-right:1px solid #024985;background:#fff">PM2.5</td><td style="background:#00e400;color:#111">0</td></tr>
  </table>
</div>
<svg class="abs" style="left:271.2px;top:71.3px" width="13" height="7" viewBox="0 0 13 7"><path d="M0 0 L6.5 6 L13 0Z" fill="#fff"/><path d="M0.3 0.2 L6.5 6 L12.7 0.2" fill="none" stroke="#ddd" stroke-width="0.6"/></svg>
</div>

<div class="abs ph" style="left:442.7px;top:1.2px;width:196.5px;height:20.3px">Select a City</div>
<div class="abs sel" style="left:442.5px;top:22.8px;width:197px;height:20.6px">Bishkek<span class="x">X</span><span class="ar"></span></div>
<div class="abs ph" style="left:442.7px;top:56.7px;width:196.5px;height:20.1px">Select a Parameter</div>
<div class="abs sel" style="left:442.5px;top:78.4px;width:197px;height:20.7px">PM2.5<span class="x">X</span><span class="ar"></span></div>

<div id="city" class="abs"><b>Bishkek</b>
  <svg class="abs" style="left:168.5px;top:15px" width="21" height="20.1" viewBox="0 0 22 21" preserveAspectRatio="none">
    <rect width="22" height="21" fill="#f1b540"/>
    <circle cx="5.6" cy="16" r="2.3" fill="#fff"/>
    <path d="M3.3 8.2 A10 10 0 0 1 13.4 18.3" fill="none" stroke="#fff" stroke-width="2.4"/>
    <path d="M3.3 3.2 A15 15 0 0 1 18.4 18.3" fill="none" stroke="#fff" stroke-width="2.6"/>
  </svg>
</div>
<div id="note" class="abs">Note: Values above 500 are considered Beyond the AQI. Follow<br>recommendations for the Hazardous category. Additional information<br>on reducing exposure to extremely high levels of particle pollution is<br>available <a>here</a>.</div>

<div class="abs tab on" style="left:12px;width:62px">AQI</div>
<div class="abs tab" style="left:76px;width:98px">Concentration</div>
<div class="abs tab" style="left:176px;width:80px">Historical</div>
<div id="tabline" class="abs"></div>
<div id="learn" class="abs">Learn more about how the Air Quality Index [AQI] is calculated from the EPA <a>here</a>.</div>

<div id="chart" class="abs">
<svg class="abs" style="left:0;top:0" width="465" height="180" viewBox="12 324 465 180" font-family="DejaVu Sans, Liberation Sans, sans-serif"><path d="M55.3 445.30H476.3" stroke="#e6e6e6" stroke-width="0.6"/><path d="M55.3 424.00H476.3" stroke="#e6e6e6" stroke-width="0.6"/><path d="M55.3 402.70H476.3" stroke="#e6e6e6" stroke-width="0.6"/><path d="M55.3 381.40H476.3" stroke="#e6e6e6" stroke-width="0.6"/><path d="M55.3 360.10H476.3" stroke="#e6e6e6" stroke-width="0.6"/><path d="M55.3 466.60H476.3" stroke="#ccd6eb" stroke-width="0.6"/><path d="M55.30 466.60V472.40" stroke="#ccd6eb" stroke-width="0.6"/><path d="M72.84 466.60V472.40" stroke="#ccd6eb" stroke-width="0.6"/><path d="M90.38 466.60V472.40" stroke="#ccd6eb" stroke-width="0.6"/><path d="M107.92 466.60V472.40" stroke="#ccd6eb" stroke-width="0.6"/><path d="M125.46 466.60V472.40" stroke="#ccd6eb" stroke-width="0.6"/><path d="M143.00 466.60V472.40" stroke="#ccd6eb" stroke-width="0.6"/><path d="M160.54 466.60V472.40" stroke="#ccd6eb" stroke-width="0.6"/><path d="M178.08 466.60V472.40" stroke="#ccd6eb" stroke-width="0.6"/><path d="M195.62 466.60V472.40" stroke="#ccd6eb" stroke-width="0.6"/><path d="M213.16 466.60V472.40" stroke="#ccd6eb" stroke-width="0.6"/><path d="M230.70 466.60V472.40" stroke="#ccd6eb" stroke-width="0.6"/><path d="M248.24 466.60V472.40" stroke="#ccd6eb" stroke-width="0.6"/><path d="M265.78 466.60V472.40" stroke="#ccd6eb" stroke-width="0.6"/><path d="M283.32 466.60V472.40" stroke="#ccd6eb" stroke-width="0.6"/><path d="M300.86 466.60V472.40" stroke="#ccd6eb" stroke-width="0.6"/><path d="M318.40 466.60V472.40" stroke="#ccd6eb" stroke-width="0.6"/><path d="M335.94 466.60V472.40" stroke="#ccd6eb" stroke-width="0.6"/><path d="M353.48 466.60V472.40" stroke="#ccd6eb" stroke-width="0.6"/><path d="M371.02 466.60V472.40" stroke="#ccd6eb" stroke-width="0.6"/><path d="M388.56 466.60V472.40" stroke="#ccd6eb" stroke-width="0.6"/><path d="M406.10 466.60V472.40" stroke="#ccd6eb" stroke-width="0.6"/><path d="M423.64 466.60V472.40" stroke="#ccd6eb" stroke-width="0.6"/><path d="M441.18 466.60V472.40" stroke="#ccd6eb" stroke-width="0.6"/><path d="M458.72 466.60V472.40" stroke="#ccd6eb" stroke-width="0.6"/><path d="M476.26 466.60V472.40" stroke="#ccd6eb" stroke-width="0.6"/><text x="46.9" y="467.8" font-size="6.2" fill="#555" text-anchor="end">0</text><text x="46.9" y="446.5" font-size="6.2" fill="#555" text-anchor="end">100</text><text x="46.9" y="425.2" font-size="6.2" fill="#555" text-anchor="end">200</text><text x="46.9" y="403.9" font-size="6.2" fill="#555" text-anchor="end">300</text><text x="46.9" y="382.6" font-size="6.2" fill="#555" text-anchor="end">400</text><text x="46.9" y="361.3" font-size="6.2" fill="#555" text-anchor="end">500</text><text transform="translate(29.3 410.6) rotate(-90)" font-size="7" fill="#333" text-anchor="middle">AQI</text><text x="247.5" y="337.5" font-size="10.3" fill="#333" text-anchor="middle">Bishkek – PM2.5</text><rect x="59.35" y="448.28" width="9.5" height="18.32" fill="#ffff00" stroke="#333" stroke-width="0.55"/><rect x="76.89" y="447.22" width="9.5" height="19.38" fill="#ffff00" stroke="#333" stroke-width="0.55"/><rect x="94.43" y="447.22" width="9.5" height="19.38" fill="#ffff00" stroke="#333" stroke-width="0.55"/><rect x="111.97" y="447.86" width="9.5" height="18.74" fill="#ffff00" stroke="#333" stroke-width="0.55"/><rect x="129.51" y="443.17" width="9.5" height="23.43" fill="#ff7e00" stroke="#333" stroke-width="0.55"/><rect x="147.05" y="433.16" width="9.5" height="33.44" fill="#ff0000" stroke="#333" stroke-width="0.55"/><rect x="164.59" y="431.67" width="9.5" height="34.93" fill="#ff0000" stroke="#333" stroke-width="0.55"/><rect x="182.13" y="431.67" width="9.5" height="34.93" fill="#ff0000" stroke="#333" stroke-width="0.55"/><rect x="199.67" y="430.60" width="9.5" height="36.00" fill="#ff0000" stroke="#333" stroke-width="0.55"/><rect x="217.21" y="426.77" width="9.5" height="39.83" fill="#ff0000" stroke="#333" stroke-width="0.55"/><rect x="234.75" y="429.96" width="9.5" height="36.64" fill="#ff0000" stroke="#333" stroke-width="0.55"/><rect x="252.29" y="433.80" width="9.5" height="32.80" fill="#ff0000" stroke="#333" stroke-width="0.55"/><rect x="269.83" y="442.32" width="9.5" height="24.28" fill="#ff7e00" stroke="#333" stroke-width="0.55"/><rect x="287.37" y="448.28" width="9.5" height="18.32" fill="#ffff00" stroke="#333" stroke-width="0.55"/><rect x="304.91" y="452.54" width="9.5" height="14.06" fill="#ffff00" stroke="#333" stroke-width="0.55"/><rect x="322.45" y="455.10" width="9.5" height="11.50" fill="#ffff00" stroke="#333" stroke-width="0.55"/><rect x="339.99" y="458.93" width="9.5" height="7.67" fill="#00e400" stroke="#333" stroke-width="0.55"/><rect x="357.53" y="462.55" width="9.5" height="4.05" fill="#00e400" stroke="#333" stroke-width="0.55"/><rect x="375.07" y="465.32" width="9.5" height="1.28" fill="#00e400" stroke="#333" stroke-width="0.55"/><text transform="translate(66.6 475.6) rotate(-45)" font-size="6.55" fill="#666" text-anchor="end">10 AM</text><text transform="translate(84.1 475.6) rotate(-45)" font-size="6.55" fill="#666" text-anchor="end">11 AM</text><text transform="translate(101.6 475.6) rotate(-45)" font-size="6.55" fill="#666" text-anchor="end">12 PM</text><text transform="translate(119.2 475.6) rotate(-45)" font-size="6.55" fill="#666" text-anchor="end">1 PM</text><text transform="translate(136.7 475.6) rotate(-45)" font-size="6.55" fill="#666" text-anchor="end">2 PM</text><text transform="translate(154.3 475.6) rotate(-45)" font-size="6.55" fill="#666" text-anchor="end">3 PM</text><text transform="translate(171.8 475.6) rotate(-45)" font-size="6.55" fill="#666" text-anchor="end">4 PM</text><text transform="translate(189.3 475.6) rotate(-45)" font-size="6.55" fill="#666" text-anchor="end">5 PM</text><text transform="translate(206.9 475.6) rotate(-45)" font-size="6.55" fill="#666" text-anchor="end">6 PM</text><text transform="translate(224.4 475.6) rotate(-45)" font-size="6.55" fill="#666" text-anchor="end">7 PM</text><text transform="translate(242.0 475.6) rotate(-45)" font-size="6.55" fill="#666" text-anchor="end">8 PM</text><text transform="translate(259.5 475.6) rotate(-45)" font-size="6.55" fill="#666" text-anchor="end">9 PM</text><text transform="translate(277.0 475.6) rotate(-45)" font-size="6.55" fill="#666" text-anchor="end">10 PM</text><text transform="translate(294.6 475.6) rotate(-45)" font-size="6.55" fill="#666" text-anchor="end">11 PM</text><text transform="translate(312.1 475.6) rotate(-45)" font-size="6.55" fill="#666" text-anchor="end">Nov 7, 2020 12 AM</text><text transform="translate(329.7 475.6) rotate(-45)" font-size="6.55" fill="#666" text-anchor="end">1 AM</text><text transform="translate(347.2 475.6) rotate(-45)" font-size="6.55" fill="#666" text-anchor="end">2 AM</text><text transform="translate(364.8 475.6) rotate(-45)" font-size="6.55" fill="#666" text-anchor="end">3 AM</text><text transform="translate(382.3 475.6) rotate(-45)" font-size="6.55" fill="#666" text-anchor="end">4 AM</text><text transform="translate(399.8 475.6) rotate(-45)" font-size="6.55" fill="#666" text-anchor="end">5 AM</text><text transform="translate(417.4 475.6) rotate(-45)" font-size="6.55" fill="#666" text-anchor="end">6 AM</text><text transform="translate(434.9 475.6) rotate(-45)" font-size="6.55" fill="#666" text-anchor="end">7 AM</text><text transform="translate(452.4 475.6) rotate(-45)" font-size="6.55" fill="#666" text-anchor="end">8 AM</text><text transform="translate(470.0 475.6) rotate(-45)" font-size="6.55" fill="#666" text-anchor="end">9 AM</text></svg>
</div>

<div id="cc" class="abs">
  <div class="h">
    <div style="font-size:8.7px;line-height:12px;margin-top:2.3px">Current Conditions</div>
    <div style="font-size:7.15px;line-height:13.4px;position:relative;top:0.8px">observed at</div>
    <div style="font-size:8.75px;line-height:12px">Nov 7, 2020 9:00 AM (LT)</div>
  </div>
  <div class="g">0 AQI<br>Good<br>PM2.5</div>
  <div class="m">
    <div style="text-align:center;font-weight:bold;font-size:7px;line-height:10px;margin-top:5.3px;color:#222">Health Message</div>
    <div style="font-size:6.98px;line-height:12.75px;margin:3.6px 0 0 4px;white-space:nowrap;color:#222">The AQI value for your community is<br>between 0 and 50. Air quality is satisfactory<br>and poses little or no health risk.</div>
  </div>
</div>
<div class="abs" style="left:491px;top:495px;font-size:6.42px;line-height:11px;color:#555;white-space:nowrap">Note: Values above 500 are considered Beyond</div>
</body>
</html>
